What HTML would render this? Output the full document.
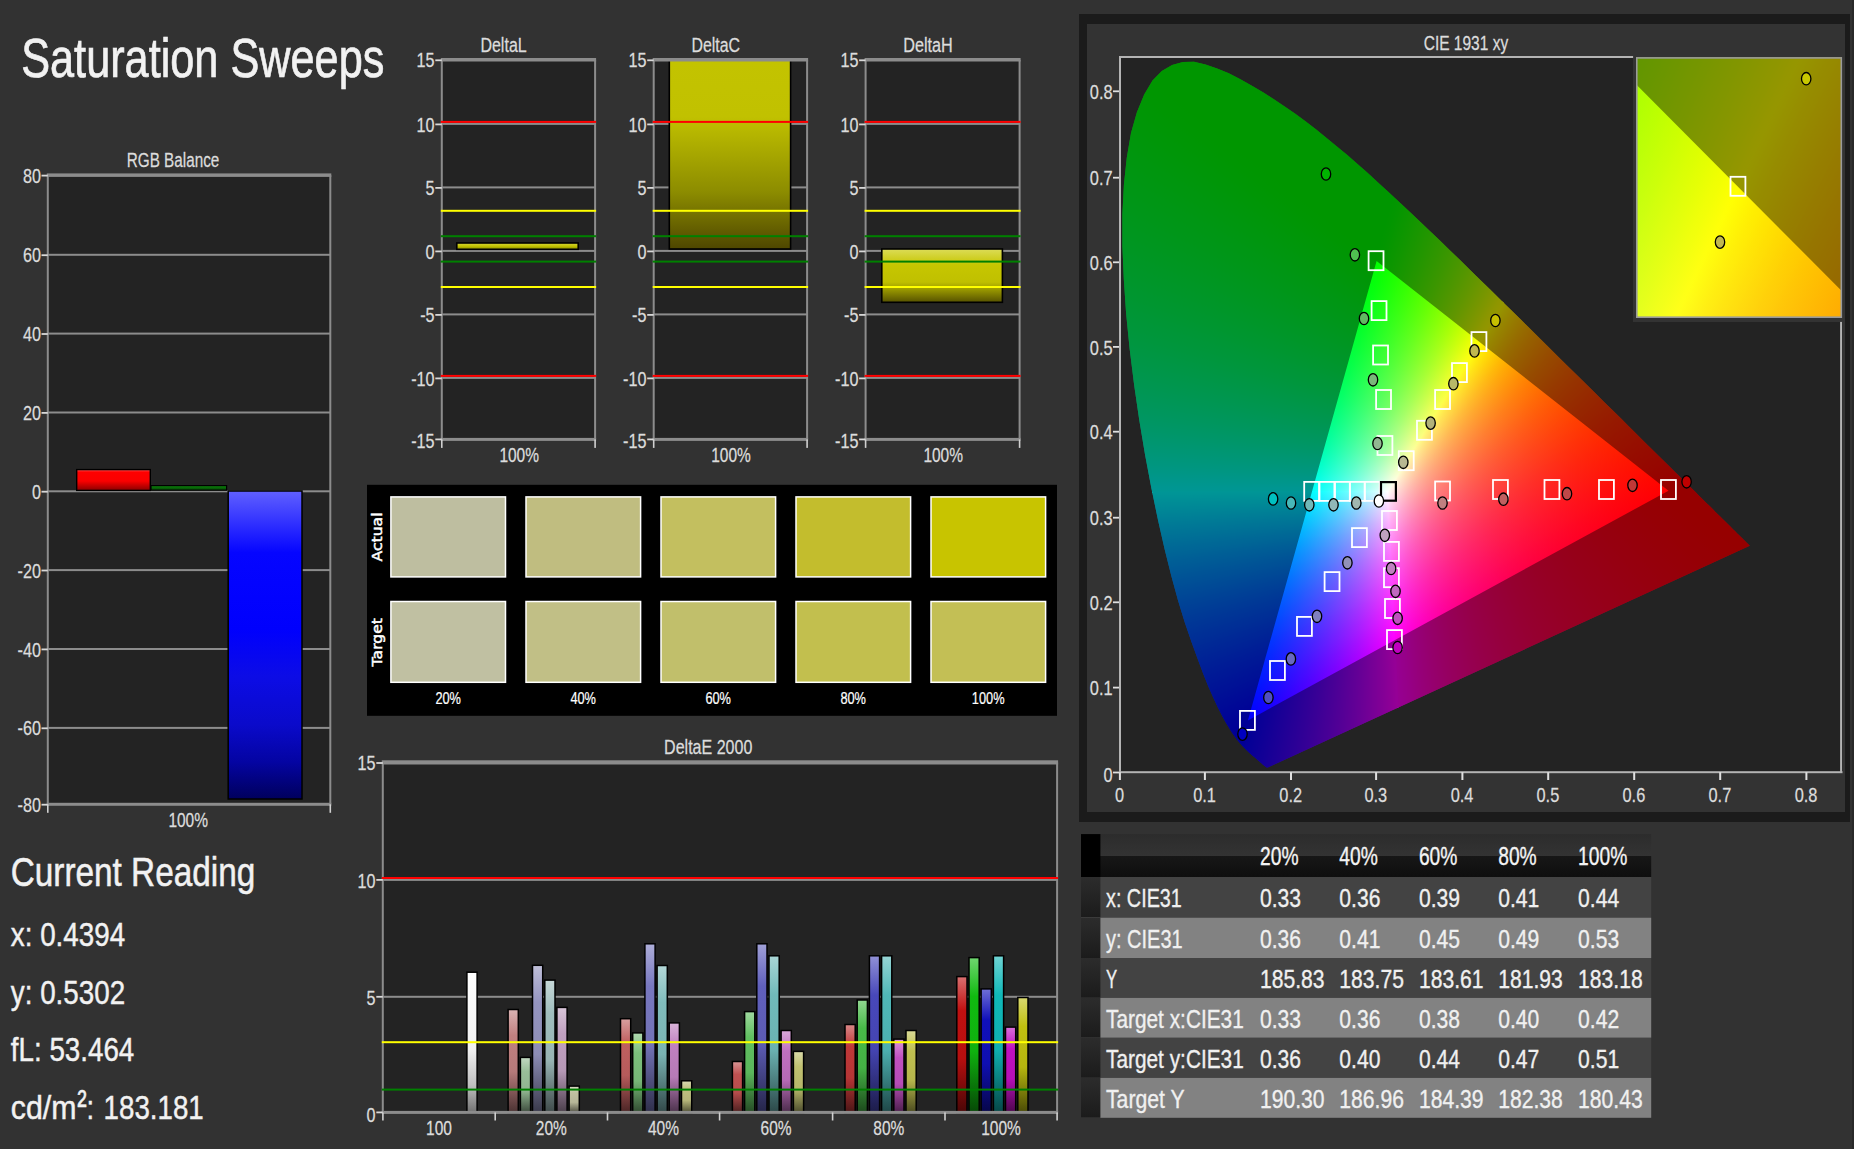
<!DOCTYPE html>
<html><head><meta charset="utf-8"><title>Saturation Sweeps</title>
<style>
html,body{margin:0;padding:0;background:#323232;}
body{width:1854px;height:1149px;overflow:hidden;position:relative;}
svg{display:block;font-family:"Liberation Sans",sans-serif;}
</style></head><body>
<div style="position:absolute;left:1852px;top:0;width:2px;height:1149px;background:#292929"></div>
<div style="position:absolute;left:1079.2px;top:13.8px;width:770.6px;height:807.9px;background:#1b1b1b"></div>
<div style="position:absolute;left:1087px;top:23.9px;width:758.1px;height:788.6px;background:#333"></div>
<div style="position:absolute;left:1119px;top:56px;width:723.5px;height:717px;background:#232323"></div>
<div style="position:absolute;left:1119.0px;top:56.0px;width:722.0px;height:717.0px;overflow:hidden;clip-path:polygon(149.5px 711.2px,149.5px 711.2px,149.5px 711.2px,149.5px 711.2px,149.4px 711.3px,149.4px 711.3px,149.3px 711.3px,149.2px 711.3px,149.2px 711.3px,149.1px 711.3px,149.0px 711.4px,148.9px 711.4px,148.9px 711.4px,148.8px 711.4px,148.7px 711.4px,148.6px 711.4px,148.5px 711.4px,148.4px 711.4px,148.3px 711.4px,148.1px 711.4px,148.0px 711.4px,147.8px 711.4px,147.7px 711.4px,147.5px 711.3px,147.2px 711.2px,146.9px 711.0px,146.6px 710.8px,146.3px 710.6px,145.9px 710.3px,145.5px 710.0px,145.1px 709.6px,144.6px 709.2px,144.0px 708.7px,143.4px 708.2px,142.7px 707.6px,142.0px 706.9px,141.2px 706.2px,140.4px 705.5px,139.4px 704.7px,138.4px 703.8px,137.2px 702.7px,135.9px 701.6px,134.5px 700.4px,133.0px 699.2px,131.4px 697.8px,129.7px 696.2px,127.9px 694.4px,125.9px 692.5px,123.7px 690.2px,121.5px 687.8px,119.1px 685.0px,116.4px 681.5px,113.4px 677.3px,110.2px 672.3px,106.6px 666.3px,102.8px 659.3px,98.7px 651.3px,94.2px 641.6px,89.3px 630.4px,84.1px 617.5px,78.5px 602.6px,72.3px 585.5px,65.7px 566.3px,59.1px 544.7px,52.4px 520.3px,45.7px 493.5px,39.1px 464.5px,32.5px 432.8px,26.1px 398.9px,20.3px 364.3px,15.1px 328.8px,10.6px 292.6px,7.1px 257.3px,4.8px 223.1px,3.4px 189.7px,3.4px 158.3px,4.9px 128.8px,7.8px 101.4px,12.0px 77.1px,17.9px 56.2px,25.2px 38.4px,33.5px 24.5px,42.8px 14.9px,53.1px 9.0px,63.9px 5.9px,75.0px 5.8px,86.5px 8.5px,98.1px 12.4px,109.8px 17.2px,121.4px 23.3px,132.9px 29.7px,144.0px 36.2px,154.9px 43.2px,165.7px 50.4px,176.3px 57.8px,186.8px 65.6px,197.2px 73.6px,207.6px 81.9px,217.9px 90.4px,228.3px 99.1px,238.5px 108.0px,248.8px 117.1px,259.0px 126.4px,269.2px 135.7px,279.4px 145.2px,289.6px 154.8px,299.9px 164.5px,310.1px 174.2px,320.4px 184.1px,330.6px 193.9px,340.8px 203.8px,350.9px 213.8px,361.1px 223.7px,371.2px 233.6px,381.3px 243.5px,391.3px 253.3px,401.3px 263.1px,411.1px 272.8px,420.9px 282.4px,430.5px 292.0px,440.0px 301.4px,449.4px 310.7px,458.7px 319.8px,467.8px 328.8px,476.7px 337.6px,485.4px 346.2px,493.9px 354.5px,502.1px 362.6px,510.0px 370.5px,517.6px 378.1px,524.8px 385.2px,531.7px 392.0px,538.3px 398.5px,544.7px 404.8px,550.8px 410.8px,556.5px 416.5px,561.9px 421.7px,566.9px 426.6px,571.6px 431.3px,576.0px 435.6px,580.1px 439.7px,583.9px 443.4px,587.4px 446.9px,590.7px 450.1px,593.7px 453.1px,596.5px 455.9px,599.1px 458.4px,601.5px 460.8px,603.7px 463.0px,605.8px 465.1px,607.8px 467.0px,609.6px 468.8px,611.4px 470.6px,613.0px 472.2px,614.5px 473.7px,616.0px 475.1px,617.3px 476.5px,618.5px 477.7px,619.7px 478.8px,620.7px 479.8px,621.7px 480.7px,622.5px 481.5px,623.3px 482.3px,624.0px 483.0px,624.7px 483.7px,625.3px 484.3px,625.8px 484.8px,626.3px 485.3px,626.7px 485.7px,627.1px 486.1px,627.4px 486.4px,627.7px 486.7px,628.0px 486.9px,628.2px 487.2px,628.4px 487.4px,628.7px 487.6px,628.9px 487.8px,629.0px 488.0px,629.3px 488.2px,629.5px 488.4px,629.7px 488.6px,629.8px 488.8px,630.0px 489.0px,630.2px 489.1px,630.3px 489.3px,630.4px 489.4px,630.5px 489.5px,630.6px 489.5px,630.6px 489.6px,630.7px 489.6px,630.7px 489.7px,630.7px 489.7px,630.8px 489.7px);">
<div style="position:absolute;left:0;top:0;width:722.0px;height:717.0px;background:#d03030;background:conic-gradient(from 51.232deg at 257.6px 204.9px,rgb(0,0,0) 0.00deg,rgb(0,0,0) 1.78deg,rgb(0,0,0) 3.56deg,rgb(0,0,0) 5.34deg,rgb(0,0,0) 7.13deg,rgb(0,0,0) 8.91deg,rgb(0,0,0) 10.69deg,rgb(0,0,0) 12.47deg,rgb(0,0,0) 14.25deg,rgb(0,0,0) 16.03deg,rgb(0,0,0) 17.81deg,rgb(0,0,0) 19.60deg,rgb(0,0,0) 21.38deg,rgb(0,0,0) 23.16deg,rgb(0,0,0) 24.94deg,rgb(0,0,0) 26.72deg,rgb(0,0,0) 28.50deg,rgb(0,0,0) 30.28deg,rgb(0,0,0) 32.07deg,rgb(0,0,0) 33.85deg,rgb(0,0,0) 35.63deg,rgb(0,0,0) 37.41deg,rgb(0,0,0) 39.19deg,rgb(0,0,0) 40.97deg,rgb(0,0,0) 42.75deg,rgb(0,0,0) 44.53deg,rgb(0,0,0) 46.32deg,rgb(0,0,0) 48.10deg,rgb(0,0,0) 49.88deg,rgb(0,0,0) 51.66deg,rgb(0,0,0) 53.44deg,rgb(0,0,0) 55.22deg,rgb(0,0,0) 57.00deg,rgb(0,0,0) 58.79deg,rgb(0,0,0) 60.57deg,rgb(0,0,0) 62.35deg,rgb(0,0,0) 64.13deg,rgb(0,0,0) 65.91deg,rgb(0,0,0) 67.69deg,rgb(0,0,0) 69.47deg,rgb(0,0,0) 71.26deg,rgb(0,0,0) 73.04deg,rgb(0,0,0) 74.82deg,rgb(0,0,0) 76.60deg,rgb(0,0,3) 78.38deg,rgb(0,0,7) 80.16deg,rgb(0,0,10) 81.94deg,rgb(0,0,14) 83.73deg,rgb(0,0,18) 85.51deg,rgb(0,0,23) 87.29deg,rgb(0,0,27) 89.07deg,rgb(0,0,32) 90.85deg,rgb(0,0,37) 92.63deg,rgb(0,0,42) 94.41deg,rgb(0,0,47) 96.20deg,rgb(0,0,53) 97.98deg,rgb(0,0,59) 99.76deg,rgb(0,0,65) 101.54deg,rgb(0,0,72) 103.32deg,rgb(0,0,79) 105.10deg,rgb(0,0,87) 106.88deg,rgb(0,0,96) 108.66deg,rgb(0,0,105) 110.45deg,rgb(0,0,115) 112.23deg,rgb(0,0,126) 114.01deg,rgb(0,0,139) 115.79deg,rgb(0,0,153) 117.57deg,rgb(0,0,169) 119.35deg,rgb(0,0,187) 121.13deg,rgb(0,0,208) 122.92deg,rgb(0,0,233) 124.70deg,rgb(0,0,255) 126.48deg,rgb(0,0,255) 128.26deg),conic-gradient(from 29.216deg at 128.9px 664.4px,rgb(255,255,0) 0.00deg,rgb(255,255,0) 1.15deg,rgb(255,252,0) 2.29deg,rgb(255,227,0) 3.44deg,rgb(255,206,0) 4.58deg,rgb(255,186,0) 5.73deg,rgb(255,169,0) 6.87deg,rgb(255,154,0) 8.02deg,rgb(255,140,0) 9.17deg,rgb(255,127,0) 10.31deg,rgb(255,116,0) 11.46deg,rgb(255,105,0) 12.60deg,rgb(255,95,0) 13.75deg,rgb(255,86,0) 14.90deg,rgb(255,78,0) 16.04deg,rgb(255,70,0) 17.19deg,rgb(255,63,0) 18.33deg,rgb(255,56,0) 19.48deg,rgb(255,49,0) 20.62deg,rgb(255,43,0) 21.77deg,rgb(255,37,0) 22.92deg,rgb(255,32,0) 24.06deg,rgb(255,27,0) 25.21deg,rgb(255,22,0) 26.35deg,rgb(255,17,0) 27.50deg,rgb(255,13,0) 28.65deg,rgb(255,8,0) 29.79deg,rgb(255,4,0) 30.94deg,rgb(255,0,0) 32.08deg,rgb(255,0,0) 33.23deg,rgb(255,0,0) 34.37deg,rgb(255,0,0) 35.52deg,rgb(255,0,0) 36.67deg,rgb(255,0,0) 37.81deg,rgb(255,0,0) 38.96deg,rgb(255,0,0) 40.10deg,rgb(255,0,0) 41.25deg,rgb(255,0,0) 42.39deg,rgb(255,0,0) 43.54deg,rgb(255,0,0) 44.69deg,rgb(255,0,0) 45.83deg,rgb(255,0,0) 46.98deg,rgb(255,0,0) 48.12deg,rgb(255,0,0) 49.27deg,rgb(255,0,0) 50.42deg,rgb(255,0,0) 51.56deg,rgb(255,0,0) 52.71deg,rgb(255,0,0) 53.85deg,rgb(255,0,0) 55.00deg,rgb(255,0,0) 56.14deg,rgb(255,0,0) 57.29deg,rgb(255,0,0) 58.44deg,rgb(255,0,0) 59.58deg,rgb(255,0,0) 60.73deg,rgb(255,0,0) 61.87deg,rgb(255,0,0) 63.02deg,rgb(255,0,0) 64.17deg,rgb(255,0,0) 65.31deg,rgb(255,0,0) 66.46deg,rgb(255,0,0) 67.60deg,rgb(255,0,0) 68.75deg,rgb(255,255,0) 69.89deg,rgb(255,255,0) 71.04deg,rgb(255,255,0) 72.19deg,rgb(255,255,0) 73.33deg,rgb(255,255,0) 74.48deg,rgb(255,255,0) 75.62deg,rgb(255,255,0) 76.77deg,rgb(255,255,0) 77.92deg,rgb(255,255,0) 79.06deg,rgb(255,255,0) 80.21deg,rgb(255,255,0) 81.35deg,rgb(255,255,0) 82.50deg);background-blend-mode:screen;clip-path:polygon(534.5px -2.0px,724.0px -2.0px,724.0px 719.0px,281.1px 719.0px,267.7px 435.3px)"></div>
<div style="position:absolute;left:0;top:0;width:722.0px;height:717.0px;background:#20b040;background:conic-gradient(from -92.337deg at 549.5px 434.7px,rgb(0,0,255) 0.00deg,rgb(0,0,255) 1.29deg,rgb(0,0,249) 2.57deg,rgb(0,0,233) 3.86deg,rgb(0,0,217) 5.15deg,rgb(0,0,203) 6.43deg,rgb(0,0,190) 7.72deg,rgb(0,0,177) 9.00deg,rgb(0,0,165) 10.29deg,rgb(0,0,154) 11.58deg,rgb(0,0,144) 12.86deg,rgb(0,0,134) 14.15deg,rgb(0,0,125) 15.44deg,rgb(0,0,116) 16.72deg,rgb(0,0,107) 18.01deg,rgb(0,0,99) 19.30deg,rgb(0,0,92) 20.58deg,rgb(0,0,84) 21.87deg,rgb(0,0,77) 23.16deg,rgb(0,0,70) 24.44deg,rgb(0,0,64) 25.73deg,rgb(0,0,57) 27.01deg,rgb(0,0,51) 28.30deg,rgb(0,0,45) 29.59deg,rgb(0,0,39) 30.87deg,rgb(0,0,34) 32.16deg,rgb(0,0,28) 33.45deg,rgb(0,0,23) 34.73deg,rgb(0,0,17) 36.02deg,rgb(0,0,12) 37.31deg,rgb(0,0,7) 38.59deg,rgb(0,0,3) 39.88deg,rgb(0,0,0) 41.16deg,rgb(0,0,0) 42.45deg,rgb(0,0,0) 43.74deg,rgb(0,0,0) 45.02deg,rgb(0,0,0) 46.31deg,rgb(0,0,0) 47.60deg,rgb(0,0,0) 48.88deg,rgb(0,0,0) 50.17deg,rgb(0,0,0) 51.46deg,rgb(0,0,0) 52.74deg,rgb(0,0,0) 54.03deg,rgb(0,0,0) 55.31deg,rgb(0,0,0) 56.60deg,rgb(0,0,0) 57.89deg,rgb(0,0,0) 59.17deg,rgb(0,0,0) 60.46deg,rgb(0,0,0) 61.75deg,rgb(0,0,0) 63.03deg,rgb(0,0,0) 64.32deg,rgb(0,0,0) 65.61deg,rgb(0,0,0) 66.89deg,rgb(0,0,0) 68.18deg,rgb(0,0,0) 69.47deg,rgb(0,0,0) 70.75deg,rgb(0,0,0) 72.04deg,rgb(0,0,0) 73.32deg,rgb(0,0,0) 74.61deg,rgb(0,0,0) 75.90deg,rgb(0,0,0) 77.18deg,rgb(0,0,0) 78.47deg,rgb(0,0,0) 79.76deg,rgb(0,0,0) 81.04deg,rgb(0,0,0) 82.33deg,rgb(0,0,0) 83.62deg,rgb(0,0,0) 84.90deg,rgb(0,0,0) 86.19deg,rgb(0,0,0) 87.47deg,rgb(0,0,0) 88.76deg,rgb(0,0,0) 90.05deg,rgb(0,0,0) 91.33deg,rgb(0,0,0) 92.62deg),conic-gradient(from -31.930deg at 128.9px 664.4px,rgb(0,255,0) 0.00deg,rgb(0,255,0) 0.91deg,rgb(0,255,0) 1.82deg,rgb(0,255,0) 2.73deg,rgb(0,255,0) 3.64deg,rgb(0,255,0) 4.55deg,rgb(0,255,0) 5.46deg,rgb(0,255,0) 6.37deg,rgb(0,255,0) 7.28deg,rgb(0,255,0) 8.19deg,rgb(0,255,0) 9.10deg,rgb(0,255,0) 10.01deg,rgb(0,255,0) 10.91deg,rgb(0,255,0) 11.82deg,rgb(0,255,0) 12.73deg,rgb(0,255,0) 13.64deg,rgb(0,255,0) 14.55deg,rgb(0,255,0) 15.46deg,rgb(0,255,0) 16.37deg,rgb(0,255,0) 17.28deg,rgb(0,255,0) 18.19deg,rgb(0,255,0) 19.10deg,rgb(0,255,0) 20.01deg,rgb(0,255,0) 20.92deg,rgb(0,255,0) 21.83deg,rgb(0,255,0) 22.74deg,rgb(0,255,0) 23.65deg,rgb(0,255,0) 24.56deg,rgb(0,255,0) 25.47deg,rgb(0,255,0) 26.38deg,rgb(0,255,0) 27.29deg,rgb(0,255,0) 28.20deg,rgb(0,255,0) 29.11deg,rgb(0,255,0) 30.02deg,rgb(0,255,0) 30.92deg,rgb(0,255,0) 31.83deg,rgb(0,255,0) 32.74deg,rgb(0,255,0) 33.65deg,rgb(0,255,0) 34.56deg,rgb(0,255,0) 35.47deg,rgb(0,255,0) 36.38deg,rgb(0,255,0) 37.29deg,rgb(0,255,0) 38.20deg,rgb(0,255,0) 39.11deg,rgb(0,255,0) 40.02deg,rgb(0,255,0) 40.93deg,rgb(0,255,0) 41.84deg,rgb(0,255,0) 42.75deg,rgb(0,255,0) 43.66deg,rgb(0,255,0) 44.57deg,rgb(0,255,0) 45.48deg,rgb(0,255,0) 46.39deg,rgb(0,255,0) 47.30deg,rgb(7,255,0) 48.21deg,rgb(18,255,0) 49.12deg,rgb(29,255,0) 50.03deg,rgb(41,255,0) 50.94deg,rgb(53,255,0) 51.84deg,rgb(65,255,0) 52.75deg,rgb(78,255,0) 53.66deg,rgb(91,255,0) 54.57deg,rgb(105,255,0) 55.48deg,rgb(120,255,0) 56.39deg,rgb(135,255,0) 57.30deg,rgb(151,255,0) 58.21deg,rgb(167,255,0) 59.12deg,rgb(185,255,0) 60.03deg,rgb(203,255,0) 60.94deg,rgb(222,255,0) 61.85deg,rgb(242,255,0) 62.76deg,rgb(255,255,0) 63.67deg,rgb(255,255,0) 64.58deg,rgb(255,255,0) 65.49deg);background-blend-mode:screen;clip-path:polygon(269.0px 436.3px,-2.0px 437.1px,-2.0px -2.0px,536.4px -2.0px)"></div>
<div style="position:absolute;left:0;top:0;width:722.0px;height:717.0px;background:#4040d0;background:conic-gradient(from -138.827deg at 549.5px 434.7px,rgb(0,255,0) 0.00deg,rgb(0,255,0) 0.71deg,rgb(0,255,0) 1.41deg,rgb(0,255,0) 2.12deg,rgb(0,0,0) 2.82deg,rgb(0,0,0) 3.53deg,rgb(0,0,0) 4.23deg,rgb(0,0,0) 4.94deg,rgb(0,0,0) 5.65deg,rgb(0,0,0) 6.35deg,rgb(0,0,0) 7.06deg,rgb(0,0,0) 7.76deg,rgb(0,0,0) 8.47deg,rgb(0,0,0) 9.18deg,rgb(0,0,0) 9.88deg,rgb(0,0,0) 10.59deg,rgb(0,0,0) 11.29deg,rgb(0,0,0) 12.00deg,rgb(0,0,0) 12.70deg,rgb(0,0,0) 13.41deg,rgb(0,0,0) 14.12deg,rgb(0,0,0) 14.82deg,rgb(0,0,0) 15.53deg,rgb(0,0,0) 16.23deg,rgb(0,0,0) 16.94deg,rgb(0,0,0) 17.64deg,rgb(0,0,0) 18.35deg,rgb(0,0,0) 19.06deg,rgb(0,0,0) 19.76deg,rgb(0,2,0) 20.47deg,rgb(0,6,0) 21.17deg,rgb(0,11,0) 21.88deg,rgb(0,15,0) 22.59deg,rgb(0,20,0) 23.29deg,rgb(0,25,0) 24.00deg,rgb(0,30,0) 24.70deg,rgb(0,34,0) 25.41deg,rgb(0,39,0) 26.11deg,rgb(0,44,0) 26.82deg,rgb(0,49,0) 27.53deg,rgb(0,54,0) 28.23deg,rgb(0,60,0) 28.94deg,rgb(0,65,0) 29.64deg,rgb(0,70,0) 30.35deg,rgb(0,76,0) 31.05deg,rgb(0,81,0) 31.76deg,rgb(0,87,0) 32.47deg,rgb(0,92,0) 33.17deg,rgb(0,98,0) 33.88deg,rgb(0,104,0) 34.58deg,rgb(0,110,0) 35.29deg,rgb(0,116,0) 36.00deg,rgb(0,123,0) 36.70deg,rgb(0,129,0) 37.41deg,rgb(0,136,0) 38.11deg,rgb(0,142,0) 38.82deg,rgb(0,149,0) 39.52deg,rgb(0,156,0) 40.23deg,rgb(0,163,0) 40.94deg,rgb(0,171,0) 41.64deg,rgb(0,178,0) 42.35deg,rgb(0,186,0) 43.05deg,rgb(0,194,0) 43.76deg,rgb(0,202,0) 44.46deg,rgb(0,210,0) 45.17deg,rgb(0,219,0) 45.88deg,rgb(0,228,0) 46.58deg,rgb(0,237,0) 47.29deg,rgb(0,246,0) 47.99deg,rgb(0,255,0) 48.70deg,rgb(0,255,0) 49.41deg,rgb(0,255,0) 50.11deg,rgb(0,255,0) 50.82deg),conic-gradient(from -184.906deg at 257.6px 204.9px,rgb(255,0,255) 0.00deg,rgb(255,0,255) 0.77deg,rgb(255,0,255) 1.54deg,rgb(253,0,255) 2.30deg,rgb(240,0,255) 3.07deg,rgb(227,0,255) 3.84deg,rgb(215,0,255) 4.61deg,rgb(203,0,255) 5.38deg,rgb(191,0,255) 6.14deg,rgb(179,0,255) 6.91deg,rgb(167,0,255) 7.68deg,rgb(156,0,255) 8.45deg,rgb(145,0,255) 9.21deg,rgb(134,0,255) 9.98deg,rgb(123,0,255) 10.75deg,rgb(113,0,255) 11.52deg,rgb(102,0,255) 12.29deg,rgb(92,0,255) 13.05deg,rgb(82,0,255) 13.82deg,rgb(72,0,255) 14.59deg,rgb(63,0,255) 15.36deg,rgb(53,0,255) 16.13deg,rgb(44,0,255) 16.89deg,rgb(34,0,255) 17.66deg,rgb(25,0,255) 18.43deg,rgb(16,0,255) 19.20deg,rgb(7,0,255) 19.97deg,rgb(0,0,255) 20.73deg,rgb(0,0,255) 21.50deg,rgb(0,0,255) 22.27deg,rgb(0,0,255) 23.04deg,rgb(0,0,255) 23.80deg,rgb(0,0,255) 24.57deg,rgb(0,0,255) 25.34deg,rgb(0,0,255) 26.11deg,rgb(0,0,255) 26.88deg,rgb(0,0,255) 27.64deg,rgb(0,0,255) 28.41deg,rgb(0,0,255) 29.18deg,rgb(0,0,255) 29.95deg,rgb(0,0,255) 30.72deg,rgb(0,0,255) 31.48deg,rgb(0,0,255) 32.25deg,rgb(0,0,255) 33.02deg,rgb(0,0,255) 33.79deg,rgb(0,0,255) 34.56deg,rgb(0,0,255) 35.32deg,rgb(0,0,255) 36.09deg,rgb(0,0,255) 36.86deg,rgb(0,0,255) 37.63deg,rgb(0,0,255) 38.39deg,rgb(0,0,255) 39.16deg,rgb(0,0,255) 39.93deg,rgb(0,0,255) 40.70deg,rgb(0,0,255) 41.47deg,rgb(0,0,255) 42.23deg,rgb(0,0,255) 43.00deg,rgb(0,0,255) 43.77deg,rgb(0,0,255) 44.54deg,rgb(0,0,255) 45.31deg,rgb(0,0,255) 46.07deg,rgb(0,0,255) 46.84deg,rgb(0,0,255) 47.61deg,rgb(0,0,255) 48.38deg,rgb(0,0,255) 49.15deg,rgb(0,0,255) 49.91deg,rgb(0,0,255) 50.68deg,rgb(0,0,255) 51.45deg,rgb(0,0,255) 52.22deg,rgb(0,0,255) 52.98deg,rgb(0,0,255) 53.75deg,rgb(0,0,255) 54.52deg,rgb(0,0,255) 55.29deg);background-blend-mode:screen;clip-path:polygon(-2.0px 719.0px,-2.0px 435.5px,269.3px 434.7px,282.7px 719.0px)"></div>
<svg style="position:absolute;left:0;top:0" width="722.0" height="717.0"><path fill-rule="evenodd" fill="#000" fill-opacity="0.412" d="M-5 -5H727V722H-5Z M549.5 434.7 257.6 204.9 128.9 664.4Z"/></svg>
</div>
<div style="position:absolute;left:1633.1px;top:55px;width:211.9px;height:266.9px;background:#333"></div>
<div style="position:absolute;left:1636.0px;top:57.1px;width:206.0px;height:260.8px;overflow:hidden;">
<div style="position:absolute;left:0;top:0;width:206.0px;height:260.8px;background:#d03030;background:conic-gradient(from 116.902deg at -317.6px -292.2px,rgb(0,0,0) 0.00deg,rgb(0,0,0) 0.45deg,rgb(0,0,0) 0.90deg,rgb(0,0,0) 1.35deg,rgb(0,0,0) 1.81deg,rgb(0,0,0) 2.26deg,rgb(0,0,0) 2.71deg,rgb(0,0,0) 3.16deg,rgb(0,0,0) 3.61deg,rgb(0,0,0) 4.06deg,rgb(0,0,0) 4.51deg,rgb(0,0,0) 4.97deg,rgb(0,0,0) 5.42deg,rgb(0,0,0) 5.87deg,rgb(0,0,0) 6.32deg,rgb(0,0,0) 6.77deg,rgb(0,0,0) 7.22deg,rgb(0,0,0) 7.67deg,rgb(0,0,0) 8.13deg,rgb(0,0,0) 8.58deg,rgb(0,0,0) 9.03deg,rgb(0,0,0) 9.48deg,rgb(0,0,0) 9.93deg,rgb(0,0,0) 10.38deg,rgb(0,0,0) 10.83deg,rgb(0,0,0) 11.29deg,rgb(0,0,0) 11.74deg,rgb(0,0,0) 12.19deg,rgb(0,0,0) 12.64deg,rgb(0,0,0) 13.09deg,rgb(0,0,0) 13.54deg,rgb(0,0,0) 13.99deg,rgb(0,0,0) 14.45deg,rgb(0,0,0) 14.90deg,rgb(0,0,0) 15.35deg,rgb(0,0,0) 15.80deg,rgb(0,0,0) 16.25deg,rgb(0,0,0) 16.70deg,rgb(0,0,0) 17.15deg,rgb(0,0,0) 17.61deg,rgb(0,0,0) 18.06deg,rgb(0,0,1) 18.51deg,rgb(0,0,1) 18.96deg,rgb(0,0,2) 19.41deg,rgb(0,0,3) 19.86deg,rgb(0,0,4) 20.31deg,rgb(0,0,5) 20.77deg,rgb(0,0,6) 21.22deg,rgb(0,0,7) 21.67deg,rgb(0,0,8) 22.12deg,rgb(0,0,9) 22.57deg,rgb(0,0,10) 23.02deg,rgb(0,0,11) 23.48deg,rgb(0,0,12) 23.93deg,rgb(0,0,13) 24.38deg,rgb(0,0,14) 24.83deg,rgb(0,0,15) 25.28deg,rgb(0,0,16) 25.73deg,rgb(0,0,17) 26.18deg,rgb(0,0,18) 26.64deg,rgb(0,0,19) 27.09deg,rgb(0,0,20) 27.54deg,rgb(0,0,22) 27.99deg,rgb(0,0,23) 28.44deg,rgb(0,0,24) 28.89deg,rgb(0,0,25) 29.34deg,rgb(0,0,26) 29.80deg,rgb(0,0,28) 30.25deg,rgb(0,0,29) 30.70deg,rgb(0,0,30) 31.15deg,rgb(0,0,31) 31.60deg,rgb(0,0,33) 32.05deg,rgb(0,0,34) 32.50deg),conic-gradient(from 23.513deg at -844.9px 2111.1px,rgb(255,255,0) 0.00deg,rgb(255,255,0) 0.11deg,rgb(255,255,0) 0.23deg,rgb(255,255,0) 0.34deg,rgb(255,255,0) 0.45deg,rgb(255,255,0) 0.57deg,rgb(255,255,0) 0.68deg,rgb(255,255,0) 0.79deg,rgb(255,255,0) 0.91deg,rgb(255,255,0) 1.02deg,rgb(255,255,0) 1.13deg,rgb(255,255,0) 1.25deg,rgb(255,255,0) 1.36deg,rgb(255,255,0) 1.47deg,rgb(255,255,0) 1.59deg,rgb(255,255,0) 1.70deg,rgb(255,255,0) 1.81deg,rgb(255,255,0) 1.93deg,rgb(255,255,0) 2.04deg,rgb(255,252,0) 2.15deg,rgb(255,249,0) 2.27deg,rgb(255,246,0) 2.38deg,rgb(255,243,0) 2.49deg,rgb(255,240,0) 2.60deg,rgb(255,237,0) 2.72deg,rgb(255,235,0) 2.83deg,rgb(255,232,0) 2.94deg,rgb(255,229,0) 3.06deg,rgb(255,227,0) 3.17deg,rgb(255,224,0) 3.28deg,rgb(255,222,0) 3.40deg,rgb(255,219,0) 3.51deg,rgb(255,217,0) 3.62deg,rgb(255,214,0) 3.74deg,rgb(255,212,0) 3.85deg,rgb(255,209,0) 3.96deg,rgb(255,207,0) 4.08deg,rgb(255,205,0) 4.19deg,rgb(255,203,0) 4.30deg,rgb(255,200,0) 4.42deg,rgb(255,198,0) 4.53deg,rgb(255,196,0) 4.64deg,rgb(255,194,0) 4.76deg,rgb(255,192,0) 4.87deg,rgb(255,190,0) 4.98deg,rgb(255,188,0) 5.10deg,rgb(255,186,0) 5.21deg,rgb(255,184,0) 5.32deg,rgb(255,182,0) 5.44deg,rgb(255,180,0) 5.55deg,rgb(255,178,0) 5.66deg,rgb(255,176,0) 5.78deg,rgb(255,174,0) 5.89deg,rgb(255,172,0) 6.00deg,rgb(255,171,0) 6.12deg,rgb(255,169,0) 6.23deg,rgb(255,167,0) 6.34deg,rgb(255,165,0) 6.46deg,rgb(255,164,0) 6.57deg,rgb(255,162,0) 6.68deg,rgb(255,160,0) 6.80deg,rgb(255,159,0) 6.91deg,rgb(255,157,0) 7.02deg,rgb(255,155,0) 7.14deg,rgb(255,154,0) 7.25deg,rgb(255,152,0) 7.36deg,rgb(255,151,0) 7.47deg,rgb(255,149,0) 7.59deg,rgb(255,148,0) 7.70deg,rgb(255,146,0) 7.81deg,rgb(255,145,0) 7.93deg,rgb(255,143,0) 8.04deg,rgb(255,142,0) 8.15deg);background-blend-mode:screen;clip-path:polygon(208.0px 262.8px,37.2px 262.8px,163.8px -2.0px,208.0px -2.0px)"></div>
<div style="position:absolute;left:0;top:0;width:206.0px;height:260.8px;background:#20b040;background:conic-gradient(from -55.678deg at 877.6px 909.5px,rgb(0,0,41) 0.00deg,rgb(0,0,40) 0.27deg,rgb(0,0,39) 0.55deg,rgb(0,0,38) 0.82deg,rgb(0,0,37) 1.09deg,rgb(0,0,36) 1.37deg,rgb(0,0,34) 1.64deg,rgb(0,0,33) 1.91deg,rgb(0,0,32) 2.19deg,rgb(0,0,31) 2.46deg,rgb(0,0,30) 2.73deg,rgb(0,0,29) 3.01deg,rgb(0,0,28) 3.28deg,rgb(0,0,27) 3.55deg,rgb(0,0,26) 3.83deg,rgb(0,0,25) 4.10deg,rgb(0,0,24) 4.37deg,rgb(0,0,23) 4.65deg,rgb(0,0,22) 4.92deg,rgb(0,0,21) 5.19deg,rgb(0,0,20) 5.47deg,rgb(0,0,19) 5.74deg,rgb(0,0,18) 6.01deg,rgb(0,0,17) 6.29deg,rgb(0,0,16) 6.56deg,rgb(0,0,15) 6.83deg,rgb(0,0,14) 7.11deg,rgb(0,0,13) 7.38deg,rgb(0,0,12) 7.65deg,rgb(0,0,11) 7.93deg,rgb(0,0,10) 8.20deg,rgb(0,0,9) 8.47deg,rgb(0,0,8) 8.75deg,rgb(0,0,7) 9.02deg,rgb(0,0,6) 9.29deg,rgb(0,0,5) 9.57deg,rgb(0,0,4) 9.84deg,rgb(0,0,3) 10.11deg,rgb(0,0,2) 10.39deg,rgb(0,0,1) 10.66deg,rgb(0,0,0) 10.93deg,rgb(0,0,0) 11.21deg,rgb(0,0,0) 11.48deg,rgb(0,0,0) 11.75deg,rgb(0,0,0) 12.03deg,rgb(0,0,0) 12.30deg,rgb(0,0,0) 12.57deg,rgb(0,0,0) 12.85deg,rgb(0,0,0) 13.12deg,rgb(0,0,0) 13.39deg,rgb(0,0,0) 13.67deg,rgb(0,0,0) 13.94deg,rgb(0,0,0) 14.21deg,rgb(0,0,0) 14.49deg,rgb(0,0,0) 14.76deg,rgb(0,0,0) 15.03deg,rgb(0,0,0) 15.31deg,rgb(0,0,0) 15.58deg,rgb(0,0,0) 15.85deg,rgb(0,0,0) 16.13deg,rgb(0,0,0) 16.40deg,rgb(0,0,0) 16.67deg,rgb(0,0,0) 16.95deg,rgb(0,0,0) 17.22deg,rgb(0,0,0) 17.49deg,rgb(0,0,0) 17.77deg,rgb(0,0,0) 18.04deg,rgb(0,0,0) 18.31deg,rgb(0,0,0) 18.59deg,rgb(0,0,0) 18.86deg,rgb(0,0,0) 19.13deg,rgb(0,0,0) 19.41deg,rgb(0,0,0) 19.68deg),conic-gradient(from 19.746deg at -844.9px 2111.1px,rgb(123,255,0) 0.00deg,rgb(125,255,0) 0.11deg,rgb(127,255,0) 0.22deg,rgb(129,255,0) 0.33deg,rgb(131,255,0) 0.43deg,rgb(133,255,0) 0.54deg,rgb(135,255,0) 0.65deg,rgb(138,255,0) 0.76deg,rgb(140,255,0) 0.87deg,rgb(142,255,0) 0.98deg,rgb(144,255,0) 1.08deg,rgb(147,255,0) 1.19deg,rgb(149,255,0) 1.30deg,rgb(151,255,0) 1.41deg,rgb(153,255,0) 1.52deg,rgb(156,255,0) 1.63deg,rgb(158,255,0) 1.74deg,rgb(160,255,0) 1.84deg,rgb(163,255,0) 1.95deg,rgb(165,255,0) 2.06deg,rgb(167,255,0) 2.17deg,rgb(170,255,0) 2.28deg,rgb(172,255,0) 2.39deg,rgb(174,255,0) 2.50deg,rgb(177,255,0) 2.60deg,rgb(179,255,0) 2.71deg,rgb(182,255,0) 2.82deg,rgb(184,255,0) 2.93deg,rgb(187,255,0) 3.04deg,rgb(189,255,0) 3.15deg,rgb(192,255,0) 3.25deg,rgb(194,255,0) 3.36deg,rgb(197,255,0) 3.47deg,rgb(199,255,0) 3.58deg,rgb(202,255,0) 3.69deg,rgb(204,255,0) 3.80deg,rgb(207,255,0) 3.91deg,rgb(210,255,0) 4.01deg,rgb(212,255,0) 4.12deg,rgb(215,255,0) 4.23deg,rgb(218,255,0) 4.34deg,rgb(220,255,0) 4.45deg,rgb(223,255,0) 4.56deg,rgb(226,255,0) 4.67deg,rgb(228,255,0) 4.77deg,rgb(231,255,0) 4.88deg,rgb(234,255,0) 4.99deg,rgb(237,255,0) 5.10deg,rgb(240,255,0) 5.21deg,rgb(242,255,0) 5.32deg,rgb(245,255,0) 5.42deg,rgb(248,255,0) 5.53deg,rgb(251,255,0) 5.64deg,rgb(254,255,0) 5.75deg,rgb(255,255,0) 5.86deg,rgb(255,255,0) 5.97deg,rgb(255,255,0) 6.08deg,rgb(255,255,0) 6.18deg,rgb(255,255,0) 6.29deg,rgb(255,255,0) 6.40deg,rgb(255,255,0) 6.51deg,rgb(255,255,0) 6.62deg,rgb(255,255,0) 6.73deg,rgb(255,255,0) 6.84deg,rgb(255,255,0) 6.94deg,rgb(255,255,0) 7.05deg,rgb(255,255,0) 7.16deg,rgb(255,255,0) 7.27deg,rgb(255,255,0) 7.38deg,rgb(255,255,0) 7.49deg,rgb(255,255,0) 7.59deg,rgb(255,255,0) 7.70deg,rgb(255,255,0) 7.81deg);background-blend-mode:screen;clip-path:polygon(39.0px 262.8px,-2.0px 262.8px,-2.0px -2.0px,165.5px -2.0px)"></div>
<svg style="position:absolute;left:0;top:0" width="206.0" height="260.8"><path fill-rule="evenodd" fill="#000" fill-opacity="0.412" d="M-5 -5H211V266H-5Z M877.6 909.5 -317.6 -292.2 -844.9 2111.1Z"/></svg>
</div>
<svg width="1854" height="1149" viewBox="0 0 1854 1149" style="position:absolute;left:0;top:0">
<defs>
<linearGradient id="g1" x1="0" y1="0" x2="0" y2="1"><stop offset="0" stop-color="#ff5a5a"/><stop offset="0.12" stop-color="#ff0000"/><stop offset="0.55" stop-color="#fa0000"/><stop offset="1" stop-color="#8a0000"/></linearGradient>
<linearGradient id="g2" x1="0" y1="0" x2="0" y2="1"><stop offset="0" stop-color="#0a8a0a"/><stop offset="1" stop-color="#064006"/></linearGradient>
<linearGradient id="g3" x1="0" y1="0" x2="0" y2="1"><stop offset="0" stop-color="#6060ff"/><stop offset="0.2" stop-color="#0505ff"/><stop offset="0.45" stop-color="#0000fd"/><stop offset="0.6" stop-color="#0c0ce6"/><stop offset="0.76" stop-color="#0a0aca"/><stop offset="0.88" stop-color="#0404a2"/><stop offset="1" stop-color="#00005c"/></linearGradient>
<linearGradient id="g4" x1="0" y1="0" x2="0" y2="1"><stop offset="0" stop-color="#d4d440"/><stop offset="0.5" stop-color="#c3c300"/><stop offset="1" stop-color="#8a8a00"/></linearGradient>
<linearGradient id="g5" x1="0" y1="0" x2="0" y2="1"><stop offset="0" stop-color="#c3c300"/><stop offset="0.3" stop-color="#c1c100"/><stop offset="0.7" stop-color="#8c8c00"/><stop offset="1" stop-color="#4e4600"/></linearGradient>
<linearGradient id="g6" x1="0" y1="0" x2="0" y2="1"><stop offset="0" stop-color="#dcdc58"/><stop offset="0.3" stop-color="#c6c600"/><stop offset="0.62" stop-color="#c0c000"/><stop offset="1" stop-color="#565200"/></linearGradient>
<linearGradient id="g7" x1="0" y1="0" x2="0" y2="1"><stop offset="0" stop-color="#ffffff"/><stop offset="0.55" stop-color="#f0f0f0"/><stop offset="0.8" stop-color="#c0c0c0"/><stop offset="1" stop-color="#707070"/></linearGradient>
<linearGradient id="g8" x1="0" y1="0" x2="0" y2="1"><stop offset="0" stop-color="#d9b3b3"/><stop offset="0.25" stop-color="#c08080"/><stop offset="0.6" stop-color="#b67a7a"/><stop offset="1" stop-color="#493131"/></linearGradient>
<linearGradient id="g9" x1="0" y1="0" x2="0" y2="1"><stop offset="0" stop-color="#c1d8c1"/><stop offset="0.25" stop-color="#98be98"/><stop offset="0.6" stop-color="#90b490"/><stop offset="1" stop-color="#3a483a"/></linearGradient>
<linearGradient id="g10" x1="0" y1="0" x2="0" y2="1"><stop offset="0" stop-color="#bfbfd9"/><stop offset="0.25" stop-color="#9494c0"/><stop offset="0.6" stop-color="#8d8db6"/><stop offset="1" stop-color="#383849"/></linearGradient>
<linearGradient id="g11" x1="0" y1="0" x2="0" y2="1"><stop offset="0" stop-color="#c6d8d8"/><stop offset="0.25" stop-color="#a0bebe"/><stop offset="0.6" stop-color="#98b4b4"/><stop offset="1" stop-color="#3d4848"/></linearGradient>
<linearGradient id="g12" x1="0" y1="0" x2="0" y2="1"><stop offset="0" stop-color="#d9c6d9"/><stop offset="0.25" stop-color="#c0a0c0"/><stop offset="0.6" stop-color="#b698b6"/><stop offset="1" stop-color="#493d49"/></linearGradient>
<linearGradient id="g13" x1="0" y1="0" x2="0" y2="1"><stop offset="0" stop-color="#d9d9c6"/><stop offset="0.25" stop-color="#c0c0a0"/><stop offset="0.6" stop-color="#b6b698"/><stop offset="1" stop-color="#49493d"/></linearGradient>
<linearGradient id="g14" x1="0" y1="0" x2="0" y2="1"><stop offset="0" stop-color="#d9a0a0"/><stop offset="0.25" stop-color="#c06060"/><stop offset="0.6" stop-color="#b65b5b"/><stop offset="1" stop-color="#492424"/></linearGradient>
<linearGradient id="g15" x1="0" y1="0" x2="0" y2="1"><stop offset="0" stop-color="#b0d9b0"/><stop offset="0.25" stop-color="#7cc07c"/><stop offset="0.6" stop-color="#76b676"/><stop offset="1" stop-color="#2f492f"/></linearGradient>
<linearGradient id="g16" x1="0" y1="0" x2="0" y2="1"><stop offset="0" stop-color="#aeaed9"/><stop offset="0.25" stop-color="#7878c0"/><stop offset="0.6" stop-color="#7272b6"/><stop offset="1" stop-color="#2e2e49"/></linearGradient>
<linearGradient id="g17" x1="0" y1="0" x2="0" y2="1"><stop offset="0" stop-color="#b3d7d7"/><stop offset="0.25" stop-color="#80bcbc"/><stop offset="0.6" stop-color="#7ab3b3"/><stop offset="1" stop-color="#314747"/></linearGradient>
<linearGradient id="g18" x1="0" y1="0" x2="0" y2="1"><stop offset="0" stop-color="#d9b3d9"/><stop offset="0.25" stop-color="#c080c0"/><stop offset="0.6" stop-color="#b67ab6"/><stop offset="1" stop-color="#493149"/></linearGradient>
<linearGradient id="g19" x1="0" y1="0" x2="0" y2="1"><stop offset="0" stop-color="#d9d9b3"/><stop offset="0.25" stop-color="#c0c080"/><stop offset="0.6" stop-color="#b6b67a"/><stop offset="1" stop-color="#494931"/></linearGradient>
<linearGradient id="g20" x1="0" y1="0" x2="0" y2="1"><stop offset="0" stop-color="#d99696"/><stop offset="0.25" stop-color="#c05050"/><stop offset="0.6" stop-color="#b64c4c"/><stop offset="1" stop-color="#491e1e"/></linearGradient>
<linearGradient id="g21" x1="0" y1="0" x2="0" y2="1"><stop offset="0" stop-color="#a0d9a0"/><stop offset="0.25" stop-color="#60c060"/><stop offset="0.6" stop-color="#5bb65b"/><stop offset="1" stop-color="#244924"/></linearGradient>
<linearGradient id="g22" x1="0" y1="0" x2="0" y2="1"><stop offset="0" stop-color="#a0a0d7"/><stop offset="0.25" stop-color="#6060bc"/><stop offset="0.6" stop-color="#5b5bb3"/><stop offset="1" stop-color="#242447"/></linearGradient>
<linearGradient id="g23" x1="0" y1="0" x2="0" y2="1"><stop offset="0" stop-color="#a9d6d6"/><stop offset="0.25" stop-color="#70baba"/><stop offset="0.6" stop-color="#6ab1b1"/><stop offset="1" stop-color="#2b4747"/></linearGradient>
<linearGradient id="g24" x1="0" y1="0" x2="0" y2="1"><stop offset="0" stop-color="#d9a9d9"/><stop offset="0.25" stop-color="#c070c0"/><stop offset="0.6" stop-color="#b66ab6"/><stop offset="1" stop-color="#492b49"/></linearGradient>
<linearGradient id="g25" x1="0" y1="0" x2="0" y2="1"><stop offset="0" stop-color="#d9d9a9"/><stop offset="0.25" stop-color="#c0c070"/><stop offset="0.6" stop-color="#b6b66a"/><stop offset="1" stop-color="#49492b"/></linearGradient>
<linearGradient id="g26" x1="0" y1="0" x2="0" y2="1"><stop offset="0" stop-color="#d98888"/><stop offset="0.25" stop-color="#c03838"/><stop offset="0.6" stop-color="#b63535"/><stop offset="1" stop-color="#491515"/></linearGradient>
<linearGradient id="g27" x1="0" y1="0" x2="0" y2="1"><stop offset="0" stop-color="#91d691"/><stop offset="0.25" stop-color="#48ba48"/><stop offset="0.6" stop-color="#44b144"/><stop offset="1" stop-color="#1b471b"/></linearGradient>
<linearGradient id="g28" x1="0" y1="0" x2="0" y2="1"><stop offset="0" stop-color="#9191d6"/><stop offset="0.25" stop-color="#4848ba"/><stop offset="0.6" stop-color="#4444b1"/><stop offset="1" stop-color="#1b1b47"/></linearGradient>
<linearGradient id="g29" x1="0" y1="0" x2="0" y2="1"><stop offset="0" stop-color="#96d4d4"/><stop offset="0.25" stop-color="#50b8b8"/><stop offset="0.6" stop-color="#4cafaf"/><stop offset="1" stop-color="#1e4646"/></linearGradient>
<linearGradient id="g30" x1="0" y1="0" x2="0" y2="1"><stop offset="0" stop-color="#d996d9"/><stop offset="0.25" stop-color="#c050c0"/><stop offset="0.6" stop-color="#b64cb6"/><stop offset="1" stop-color="#491e49"/></linearGradient>
<linearGradient id="g31" x1="0" y1="0" x2="0" y2="1"><stop offset="0" stop-color="#d9d996"/><stop offset="0.25" stop-color="#c0c050"/><stop offset="0.6" stop-color="#b6b64c"/><stop offset="1" stop-color="#49491e"/></linearGradient>
<linearGradient id="g32" x1="0" y1="0" x2="0" y2="1"><stop offset="0" stop-color="#d97070"/><stop offset="0.25" stop-color="#c01010"/><stop offset="0.6" stop-color="#b60f0f"/><stop offset="1" stop-color="#490606"/></linearGradient>
<linearGradient id="g33" x1="0" y1="0" x2="0" y2="1"><stop offset="0" stop-color="#70d670"/><stop offset="0.25" stop-color="#10ba10"/><stop offset="0.6" stop-color="#0fb10f"/><stop offset="1" stop-color="#064706"/></linearGradient>
<linearGradient id="g34" x1="0" y1="0" x2="0" y2="1"><stop offset="0" stop-color="#7070d6"/><stop offset="0.25" stop-color="#1010ba"/><stop offset="0.6" stop-color="#0f0fb1"/><stop offset="1" stop-color="#060647"/></linearGradient>
<linearGradient id="g35" x1="0" y1="0" x2="0" y2="1"><stop offset="0" stop-color="#70d4d4"/><stop offset="0.25" stop-color="#10b8b8"/><stop offset="0.6" stop-color="#0fafaf"/><stop offset="1" stop-color="#064646"/></linearGradient>
<linearGradient id="g36" x1="0" y1="0" x2="0" y2="1"><stop offset="0" stop-color="#d970d9"/><stop offset="0.25" stop-color="#c010c0"/><stop offset="0.6" stop-color="#b60fb6"/><stop offset="1" stop-color="#490649"/></linearGradient>
<linearGradient id="g37" x1="0" y1="0" x2="0" y2="1"><stop offset="0" stop-color="#d9d970"/><stop offset="0.25" stop-color="#c0c010"/><stop offset="0.6" stop-color="#b6b60f"/><stop offset="1" stop-color="#494906"/></linearGradient>
<linearGradient id="g38" x1="0" y1="0" x2="0" y2="1"><stop offset="0" stop-color="#2c2c2c"/><stop offset="0.5" stop-color="#333333"/><stop offset="0.505" stop-color="#171717"/><stop offset="1" stop-color="#0e0e0e"/></linearGradient>
<linearGradient id="g39" x1="0" y1="0" x2="0" y2="1"><stop offset="0" stop-color="#2c2c2c"/><stop offset="1" stop-color="#1b1b1b"/></linearGradient>
</defs>
<text x="21.2" y="77.3" font-size="56" textLength="363.2" lengthAdjust="spacingAndGlyphs" fill="#f2f2f2" stroke="#f2f2f2" stroke-width="0.73" >Saturation Sweeps</text>
<rect x="47.8" y="175.2" width="282.5" height="629.1" fill="#232323"/>
<rect x="47.8" y="253.8" width="282.5" height="2" fill="#8c8c8c"/>
<rect x="47.8" y="332.6" width="282.5" height="2" fill="#8c8c8c"/>
<rect x="47.8" y="411.5" width="282.5" height="2" fill="#8c8c8c"/>
<rect x="47.8" y="490.3" width="282.5" height="2" fill="#8c8c8c"/>
<rect x="47.8" y="569.1" width="282.5" height="2" fill="#8c8c8c"/>
<rect x="47.8" y="648.0" width="282.5" height="2" fill="#8c8c8c"/>
<rect x="47.8" y="726.9" width="282.5" height="2" fill="#8c8c8c"/>
<rect x="76.7" y="469.6" width="73.6" height="20.8" fill="url(#g1)" stroke="#000" stroke-width="1.4"/>
<rect x="151" y="485.6" width="75.6" height="4.6" fill="url(#g2)" stroke="#000" stroke-width="1.2"/>
<rect x="228.2" y="491" width="73.8" height="308" fill="url(#g3)" stroke="#000" stroke-width="1.5"/>
<rect x="46.8" y="173.4" width="284.5" height="3.5" fill="#8c8c8c"/>
<rect x="46.8" y="802.8" width="284.5" height="3" fill="#8c8c8c"/>
<rect x="46.8" y="175.2" width="2" height="629.1" fill="#8c8c8c"/>
<rect x="329.3" y="175.2" width="2" height="629.1" fill="#8c8c8c"/>
<rect x="41.5" y="174.7" width="6.3" height="1.8" fill="#d8d8d8"/>
<text x="23.0" y="182.7" font-size="21" textLength="18.0" lengthAdjust="spacingAndGlyphs" fill="#dcdcdc" stroke="#dcdcdc" stroke-width="0.27" >80</text>
<rect x="41.5" y="254.3" width="6.3" height="1.8" fill="#d8d8d8"/>
<text x="23.0" y="262.2" font-size="21" textLength="18.0" lengthAdjust="spacingAndGlyphs" fill="#dcdcdc" stroke="#dcdcdc" stroke-width="0.27" >60</text>
<rect x="41.5" y="333.1" width="6.3" height="1.8" fill="#d8d8d8"/>
<text x="23.0" y="341.1" font-size="21" textLength="18.0" lengthAdjust="spacingAndGlyphs" fill="#dcdcdc" stroke="#dcdcdc" stroke-width="0.27" >40</text>
<rect x="41.5" y="412.0" width="6.3" height="1.8" fill="#d8d8d8"/>
<text x="23.0" y="420.0" font-size="21" textLength="18.0" lengthAdjust="spacingAndGlyphs" fill="#dcdcdc" stroke="#dcdcdc" stroke-width="0.27" >20</text>
<rect x="41.5" y="490.8" width="6.3" height="1.8" fill="#d8d8d8"/>
<text x="32.0" y="498.8" font-size="21" textLength="9.0" lengthAdjust="spacingAndGlyphs" fill="#dcdcdc" stroke="#dcdcdc" stroke-width="0.27" >0</text>
<rect x="41.5" y="569.6" width="6.3" height="1.8" fill="#d8d8d8"/>
<text x="17.6" y="577.6" font-size="21" textLength="23.4" lengthAdjust="spacingAndGlyphs" fill="#dcdcdc" stroke="#dcdcdc" stroke-width="0.27" >-20</text>
<rect x="41.5" y="648.5" width="6.3" height="1.8" fill="#d8d8d8"/>
<text x="17.6" y="656.5" font-size="21" textLength="23.4" lengthAdjust="spacingAndGlyphs" fill="#dcdcdc" stroke="#dcdcdc" stroke-width="0.27" >-40</text>
<rect x="41.5" y="727.4" width="6.3" height="1.8" fill="#d8d8d8"/>
<text x="17.6" y="735.4" font-size="21" textLength="23.4" lengthAdjust="spacingAndGlyphs" fill="#dcdcdc" stroke="#dcdcdc" stroke-width="0.27" >-60</text>
<rect x="41.5" y="803.8" width="6.3" height="1.8" fill="#d8d8d8"/>
<text x="17.6" y="811.8" font-size="21" textLength="23.4" lengthAdjust="spacingAndGlyphs" fill="#dcdcdc" stroke="#dcdcdc" stroke-width="0.27" >-80</text>
<rect x="47.0" y="804.3" width="1.6" height="8.5" fill="#d0d0d0"/>
<rect x="329.5" y="804.3" width="1.6" height="8.5" fill="#d0d0d0"/>
<text x="168.4" y="827.3" font-size="20" textLength="39.6" lengthAdjust="spacingAndGlyphs" fill="#dcdcdc" stroke="#dcdcdc" stroke-width="0.26" >100%</text>
<text x="126.8" y="166.5" font-size="20" textLength="92.5" lengthAdjust="spacingAndGlyphs" fill="#dcdcdc" stroke="#dcdcdc" stroke-width="0.26" >RGB Balance</text>
<text x="10.7" y="885.7" font-size="40.5" textLength="244.6" lengthAdjust="spacingAndGlyphs" fill="#f2f2f2" stroke="#f2f2f2" stroke-width="0.53" >Current Reading</text>
<text x="10.8" y="945.9" font-size="34" textLength="114.4" lengthAdjust="spacingAndGlyphs" fill="#f2f2f2" stroke="#f2f2f2" stroke-width="0.44" >x: 0.4394</text>
<text x="10.8" y="1004.0" font-size="34" textLength="114.4" lengthAdjust="spacingAndGlyphs" fill="#f2f2f2" stroke="#f2f2f2" stroke-width="0.44" >y: 0.5302</text>
<text x="10.8" y="1061.0" font-size="34" textLength="123.5" lengthAdjust="spacingAndGlyphs" fill="#f2f2f2" stroke="#f2f2f2" stroke-width="0.44" >fL: 53.464</text>
<text x="10.8" y="1118.8" font-size="34" textLength="65.8" lengthAdjust="spacingAndGlyphs" fill="#f2f2f2" stroke="#f2f2f2" stroke-width="0.44" >cd/m</text>
<text x="77.2" y="1117.6" font-size="40" textLength="9.4" lengthAdjust="spacingAndGlyphs" fill="#f2f2f2" stroke="#f2f2f2" stroke-width="0.52" >²</text>
<text x="86.6" y="1118.8" font-size="34" textLength="7.6" lengthAdjust="spacingAndGlyphs" fill="#f2f2f2" stroke="#f2f2f2" stroke-width="0.44" >:</text>
<text x="103.6" y="1118.8" font-size="34" textLength="100.1" lengthAdjust="spacingAndGlyphs" fill="#f2f2f2" stroke="#f2f2f2" stroke-width="0.44" >183.181</text>
<rect x="441.8" y="59.8" width="153.3" height="379.6" fill="#232323"/>
<rect x="441.8" y="122.9" width="153.3" height="2" fill="#8c8c8c"/>
<rect x="441.8" y="186.4" width="153.3" height="2" fill="#8c8c8c"/>
<rect x="441.8" y="249.9" width="153.3" height="2" fill="#8c8c8c"/>
<rect x="441.8" y="313.4" width="153.3" height="2" fill="#8c8c8c"/>
<rect x="441.8" y="376.9" width="153.3" height="2" fill="#8c8c8c"/>
<rect x="456.8" y="243.0" width="121.4" height="6.3" fill="url(#g4)" stroke="#000" stroke-width="1.6"/>
<rect x="440.8" y="58.0" width="155.3" height="3.5" fill="#8c8c8c"/>
<rect x="440.8" y="437.9" width="155.3" height="3" fill="#8c8c8c"/>
<rect x="440.8" y="59.8" width="2" height="379.6" fill="#8c8c8c"/>
<rect x="594.1" y="59.8" width="2" height="379.6" fill="#8c8c8c"/>
<rect x="440.8" y="120.9" width="155.3" height="2" fill="#ff0000"/>
<rect x="440.8" y="374.9" width="155.3" height="2" fill="#ff0000"/>
<rect x="440.8" y="209.8" width="155.3" height="2" fill="#ffff00"/>
<rect x="440.8" y="286.0" width="155.3" height="2" fill="#ffff00"/>
<rect x="440.8" y="235.2" width="155.3" height="2" fill="#008000"/>
<rect x="440.8" y="260.6" width="155.3" height="2" fill="#008000"/>
<rect x="435.3" y="59.4" width="6.5" height="1.8" fill="#d8d8d8"/>
<text x="416.6" y="67.4" font-size="21" textLength="18.0" lengthAdjust="spacingAndGlyphs" fill="#dcdcdc" stroke="#dcdcdc" stroke-width="0.27" >15</text>
<rect x="435.3" y="123.5" width="6.5" height="1.8" fill="#d8d8d8"/>
<text x="416.6" y="131.5" font-size="21" textLength="18.0" lengthAdjust="spacingAndGlyphs" fill="#dcdcdc" stroke="#dcdcdc" stroke-width="0.27" >10</text>
<rect x="435.3" y="187.0" width="6.5" height="1.8" fill="#d8d8d8"/>
<text x="425.6" y="195.0" font-size="21" textLength="9.0" lengthAdjust="spacingAndGlyphs" fill="#dcdcdc" stroke="#dcdcdc" stroke-width="0.27" >5</text>
<rect x="435.3" y="250.5" width="6.5" height="1.8" fill="#d8d8d8"/>
<text x="425.6" y="258.5" font-size="21" textLength="9.0" lengthAdjust="spacingAndGlyphs" fill="#dcdcdc" stroke="#dcdcdc" stroke-width="0.27" >0</text>
<rect x="435.3" y="314.0" width="6.5" height="1.8" fill="#d8d8d8"/>
<text x="420.2" y="322.0" font-size="21" textLength="14.4" lengthAdjust="spacingAndGlyphs" fill="#dcdcdc" stroke="#dcdcdc" stroke-width="0.27" >-5</text>
<rect x="435.3" y="377.5" width="6.5" height="1.8" fill="#d8d8d8"/>
<text x="411.2" y="385.5" font-size="21" textLength="23.4" lengthAdjust="spacingAndGlyphs" fill="#dcdcdc" stroke="#dcdcdc" stroke-width="0.27" >-10</text>
<rect x="435.3" y="438.5" width="6.5" height="1.8" fill="#d8d8d8"/>
<text x="411.2" y="447.9" font-size="21" textLength="23.4" lengthAdjust="spacingAndGlyphs" fill="#dcdcdc" stroke="#dcdcdc" stroke-width="0.27" >-15</text>
<rect x="441.0" y="439.4" width="1.6" height="8.5" fill="#d0d0d0"/>
<rect x="594.3" y="439.4" width="1.6" height="8.5" fill="#d0d0d0"/>
<text x="499.4" y="462.0" font-size="20" textLength="39.6" lengthAdjust="spacingAndGlyphs" fill="#dcdcdc" stroke="#dcdcdc" stroke-width="0.26" >100%</text>
<text x="480.4" y="51.9" font-size="20" textLength="46.3" lengthAdjust="spacingAndGlyphs" fill="#dcdcdc" stroke="#dcdcdc" stroke-width="0.26" >DeltaL</text>
<rect x="653.7" y="59.8" width="153.4" height="379.6" fill="#232323"/>
<rect x="653.7" y="122.9" width="153.4" height="2" fill="#8c8c8c"/>
<rect x="653.7" y="186.4" width="153.4" height="2" fill="#8c8c8c"/>
<rect x="653.7" y="249.9" width="153.4" height="2" fill="#8c8c8c"/>
<rect x="653.7" y="313.4" width="153.4" height="2" fill="#8c8c8c"/>
<rect x="653.7" y="376.9" width="153.4" height="2" fill="#8c8c8c"/>
<rect x="669.3" y="59.8" width="121.3" height="189.2" fill="url(#g5)" stroke="#000" stroke-width="1.6"/>
<rect x="652.7" y="58.0" width="155.4" height="3.5" fill="#8c8c8c"/>
<rect x="652.7" y="437.9" width="155.4" height="3" fill="#8c8c8c"/>
<rect x="652.7" y="59.8" width="2" height="379.6" fill="#8c8c8c"/>
<rect x="806.1" y="59.8" width="2" height="379.6" fill="#8c8c8c"/>
<rect x="652.7" y="120.9" width="155.4" height="2" fill="#ff0000"/>
<rect x="652.7" y="374.9" width="155.4" height="2" fill="#ff0000"/>
<rect x="652.7" y="209.8" width="155.4" height="2" fill="#ffff00"/>
<rect x="652.7" y="286.0" width="155.4" height="2" fill="#ffff00"/>
<rect x="652.7" y="235.2" width="155.4" height="2" fill="#008000"/>
<rect x="652.7" y="260.6" width="155.4" height="2" fill="#008000"/>
<rect x="647.2" y="59.4" width="6.5" height="1.8" fill="#d8d8d8"/>
<text x="628.5" y="67.4" font-size="21" textLength="18.0" lengthAdjust="spacingAndGlyphs" fill="#dcdcdc" stroke="#dcdcdc" stroke-width="0.27" >15</text>
<rect x="647.2" y="123.5" width="6.5" height="1.8" fill="#d8d8d8"/>
<text x="628.5" y="131.5" font-size="21" textLength="18.0" lengthAdjust="spacingAndGlyphs" fill="#dcdcdc" stroke="#dcdcdc" stroke-width="0.27" >10</text>
<rect x="647.2" y="187.0" width="6.5" height="1.8" fill="#d8d8d8"/>
<text x="637.5" y="195.0" font-size="21" textLength="9.0" lengthAdjust="spacingAndGlyphs" fill="#dcdcdc" stroke="#dcdcdc" stroke-width="0.27" >5</text>
<rect x="647.2" y="250.5" width="6.5" height="1.8" fill="#d8d8d8"/>
<text x="637.5" y="258.5" font-size="21" textLength="9.0" lengthAdjust="spacingAndGlyphs" fill="#dcdcdc" stroke="#dcdcdc" stroke-width="0.27" >0</text>
<rect x="647.2" y="314.0" width="6.5" height="1.8" fill="#d8d8d8"/>
<text x="632.1" y="322.0" font-size="21" textLength="14.4" lengthAdjust="spacingAndGlyphs" fill="#dcdcdc" stroke="#dcdcdc" stroke-width="0.27" >-5</text>
<rect x="647.2" y="377.5" width="6.5" height="1.8" fill="#d8d8d8"/>
<text x="623.1" y="385.5" font-size="21" textLength="23.4" lengthAdjust="spacingAndGlyphs" fill="#dcdcdc" stroke="#dcdcdc" stroke-width="0.27" >-10</text>
<rect x="647.2" y="438.5" width="6.5" height="1.8" fill="#d8d8d8"/>
<text x="623.1" y="447.9" font-size="21" textLength="23.4" lengthAdjust="spacingAndGlyphs" fill="#dcdcdc" stroke="#dcdcdc" stroke-width="0.27" >-15</text>
<rect x="652.9" y="439.4" width="1.6" height="8.5" fill="#d0d0d0"/>
<rect x="806.3" y="439.4" width="1.6" height="8.5" fill="#d0d0d0"/>
<text x="711.2" y="462.0" font-size="20" textLength="39.6" lengthAdjust="spacingAndGlyphs" fill="#dcdcdc" stroke="#dcdcdc" stroke-width="0.26" >100%</text>
<text x="691.4" y="51.9" font-size="20" textLength="48.7" lengthAdjust="spacingAndGlyphs" fill="#dcdcdc" stroke="#dcdcdc" stroke-width="0.26" >DeltaC</text>
<rect x="865.6" y="59.8" width="154.0" height="379.6" fill="#232323"/>
<rect x="865.6" y="122.9" width="154.0" height="2" fill="#8c8c8c"/>
<rect x="865.6" y="186.4" width="154.0" height="2" fill="#8c8c8c"/>
<rect x="865.6" y="249.9" width="154.0" height="2" fill="#8c8c8c"/>
<rect x="865.6" y="313.4" width="154.0" height="2" fill="#8c8c8c"/>
<rect x="865.6" y="376.9" width="154.0" height="2" fill="#8c8c8c"/>
<rect x="881.8" y="249.0" width="120.6" height="53.3" fill="url(#g6)" stroke="#000" stroke-width="1.6"/>
<rect x="864.6" y="58.0" width="156.0" height="3.5" fill="#8c8c8c"/>
<rect x="864.6" y="437.9" width="156.0" height="3" fill="#8c8c8c"/>
<rect x="864.6" y="59.8" width="2" height="379.6" fill="#8c8c8c"/>
<rect x="1018.6" y="59.8" width="2" height="379.6" fill="#8c8c8c"/>
<rect x="864.6" y="120.9" width="156.0" height="2" fill="#ff0000"/>
<rect x="864.6" y="374.9" width="156.0" height="2" fill="#ff0000"/>
<rect x="864.6" y="209.8" width="156.0" height="2" fill="#ffff00"/>
<rect x="864.6" y="286.0" width="156.0" height="2" fill="#ffff00"/>
<rect x="864.6" y="235.2" width="156.0" height="2" fill="#008000"/>
<rect x="864.6" y="260.6" width="156.0" height="2" fill="#008000"/>
<rect x="859.1" y="59.4" width="6.5" height="1.8" fill="#d8d8d8"/>
<text x="840.4" y="67.4" font-size="21" textLength="18.0" lengthAdjust="spacingAndGlyphs" fill="#dcdcdc" stroke="#dcdcdc" stroke-width="0.27" >15</text>
<rect x="859.1" y="123.5" width="6.5" height="1.8" fill="#d8d8d8"/>
<text x="840.4" y="131.5" font-size="21" textLength="18.0" lengthAdjust="spacingAndGlyphs" fill="#dcdcdc" stroke="#dcdcdc" stroke-width="0.27" >10</text>
<rect x="859.1" y="187.0" width="6.5" height="1.8" fill="#d8d8d8"/>
<text x="849.4" y="195.0" font-size="21" textLength="9.0" lengthAdjust="spacingAndGlyphs" fill="#dcdcdc" stroke="#dcdcdc" stroke-width="0.27" >5</text>
<rect x="859.1" y="250.5" width="6.5" height="1.8" fill="#d8d8d8"/>
<text x="849.4" y="258.5" font-size="21" textLength="9.0" lengthAdjust="spacingAndGlyphs" fill="#dcdcdc" stroke="#dcdcdc" stroke-width="0.27" >0</text>
<rect x="859.1" y="314.0" width="6.5" height="1.8" fill="#d8d8d8"/>
<text x="844.0" y="322.0" font-size="21" textLength="14.4" lengthAdjust="spacingAndGlyphs" fill="#dcdcdc" stroke="#dcdcdc" stroke-width="0.27" >-5</text>
<rect x="859.1" y="377.5" width="6.5" height="1.8" fill="#d8d8d8"/>
<text x="835.0" y="385.5" font-size="21" textLength="23.4" lengthAdjust="spacingAndGlyphs" fill="#dcdcdc" stroke="#dcdcdc" stroke-width="0.27" >-10</text>
<rect x="859.1" y="438.5" width="6.5" height="1.8" fill="#d8d8d8"/>
<text x="835.0" y="447.9" font-size="21" textLength="23.4" lengthAdjust="spacingAndGlyphs" fill="#dcdcdc" stroke="#dcdcdc" stroke-width="0.27" >-15</text>
<rect x="864.8" y="439.4" width="1.6" height="8.5" fill="#d0d0d0"/>
<rect x="1018.8" y="439.4" width="1.6" height="8.5" fill="#d0d0d0"/>
<text x="923.4" y="462.0" font-size="20" textLength="39.6" lengthAdjust="spacingAndGlyphs" fill="#dcdcdc" stroke="#dcdcdc" stroke-width="0.26" >100%</text>
<text x="903.2" y="51.9" font-size="20" textLength="49.6" lengthAdjust="spacingAndGlyphs" fill="#dcdcdc" stroke="#dcdcdc" stroke-width="0.26" >DeltaH</text>
<rect x="367" y="484.8" width="690" height="231" fill="#000"/>
<rect x="390.9" y="496.9" width="114.6" height="80" fill="#bebea0" stroke="#fff" stroke-width="1.5"/>
<rect x="390.9" y="601.5" width="114.6" height="80.8" fill="#c0c0a2" stroke="#fff" stroke-width="1.5"/>
<text x="435.4" y="703.8" font-size="16" textLength="25.6" lengthAdjust="spacingAndGlyphs" fill="#fff" stroke="#fff" stroke-width="0.21" >20%</text>
<rect x="526.0" y="496.9" width="114.6" height="80" fill="#c0bd80" stroke="#fff" stroke-width="1.5"/>
<rect x="526.0" y="601.5" width="114.6" height="80.8" fill="#c1bf86" stroke="#fff" stroke-width="1.5"/>
<text x="570.4" y="703.8" font-size="16" textLength="25.6" lengthAdjust="spacingAndGlyphs" fill="#fff" stroke="#fff" stroke-width="0.21" >40%</text>
<rect x="661.0" y="496.9" width="114.6" height="80" fill="#c3bf5f" stroke="#fff" stroke-width="1.5"/>
<rect x="661.0" y="601.5" width="114.6" height="80.8" fill="#c1bf6b" stroke="#fff" stroke-width="1.5"/>
<text x="705.4" y="703.8" font-size="16" textLength="25.6" lengthAdjust="spacingAndGlyphs" fill="#fff" stroke="#fff" stroke-width="0.21" >60%</text>
<rect x="796.0" y="496.9" width="114.6" height="80" fill="#c3bd2d" stroke="#fff" stroke-width="1.5"/>
<rect x="796.0" y="601.5" width="114.6" height="80.8" fill="#c2bf4e" stroke="#fff" stroke-width="1.5"/>
<text x="840.4" y="703.8" font-size="16" textLength="25.6" lengthAdjust="spacingAndGlyphs" fill="#fff" stroke="#fff" stroke-width="0.21" >80%</text>
<rect x="931.0" y="496.9" width="114.6" height="80" fill="#c8c400" stroke="#fff" stroke-width="1.5"/>
<rect x="931.0" y="601.5" width="114.6" height="80.8" fill="#c3bf55" stroke="#fff" stroke-width="1.5"/>
<text x="971.8" y="703.8" font-size="16" textLength="32.7" lengthAdjust="spacingAndGlyphs" fill="#fff" stroke="#fff" stroke-width="0.21" >100%</text>
<text transform="translate(381.8,537) rotate(-90)" x="-24.5" y="0" font-size="13.4" font-family="DejaVu Sans, sans-serif" stroke="#fff" stroke-width="0.45" textLength="49" lengthAdjust="spacingAndGlyphs" fill="#fff">Actual</text>
<text transform="translate(381.8,642.2) rotate(-90)" x="-24.2" y="0" font-size="13.4" font-family="DejaVu Sans, sans-serif" stroke="#fff" stroke-width="0.45" textLength="48.4" lengthAdjust="spacingAndGlyphs" fill="#fff">Target</text>
<rect x="382.8" y="762.4" width="674.3" height="350.0" fill="#232323"/>
<rect x="382.8" y="878.9" width="674.3" height="2" fill="#8c8c8c"/>
<rect x="382.8" y="995.8" width="674.3" height="2" fill="#8c8c8c"/>
<rect x="466.9" y="972.2" width="10.2" height="140.9" fill="url(#g7)" stroke="#000" stroke-width="1.5"/>
<rect x="508.1" y="1009.5" width="10.2" height="103.7" fill="url(#g8)" stroke="#000" stroke-width="1.5"/>
<rect x="520.4" y="1057.4" width="10.2" height="55.8" fill="url(#g9)" stroke="#000" stroke-width="1.5"/>
<rect x="532.5" y="965.3" width="10.2" height="147.9" fill="url(#g10)" stroke="#000" stroke-width="1.5"/>
<rect x="544.8" y="980.1" width="10.2" height="133.1" fill="url(#g11)" stroke="#000" stroke-width="1.5"/>
<rect x="556.9" y="1007.4" width="10.2" height="105.7" fill="url(#g12)" stroke="#000" stroke-width="1.5"/>
<rect x="569.1" y="1086.1" width="10.2" height="27.1" fill="url(#g13)" stroke="#000" stroke-width="1.5"/>
<rect x="620.5" y="1018.7" width="10.2" height="94.4" fill="url(#g14)" stroke="#000" stroke-width="1.5"/>
<rect x="632.7" y="1032.9" width="10.2" height="80.3" fill="url(#g15)" stroke="#000" stroke-width="1.5"/>
<rect x="644.9" y="943.8" width="10.2" height="169.4" fill="url(#g16)" stroke="#000" stroke-width="1.5"/>
<rect x="657.1" y="965.5" width="10.2" height="147.6" fill="url(#g17)" stroke="#000" stroke-width="1.5"/>
<rect x="669.2" y="1022.9" width="10.2" height="90.2" fill="url(#g18)" stroke="#000" stroke-width="1.5"/>
<rect x="681.5" y="1080.8" width="10.2" height="32.4" fill="url(#g19)" stroke="#000" stroke-width="1.5"/>
<rect x="732.4" y="1061.5" width="10.2" height="51.6" fill="url(#g20)" stroke="#000" stroke-width="1.5"/>
<rect x="744.6" y="1011.6" width="10.2" height="101.6" fill="url(#g21)" stroke="#000" stroke-width="1.5"/>
<rect x="756.8" y="943.8" width="10.2" height="169.4" fill="url(#g22)" stroke="#000" stroke-width="1.5"/>
<rect x="769.0" y="955.8" width="10.2" height="157.4" fill="url(#g23)" stroke="#000" stroke-width="1.5"/>
<rect x="781.1" y="1030.5" width="10.2" height="82.6" fill="url(#g24)" stroke="#000" stroke-width="1.5"/>
<rect x="793.4" y="1051.4" width="10.2" height="61.8" fill="url(#g25)" stroke="#000" stroke-width="1.5"/>
<rect x="845.0" y="1024.5" width="10.2" height="88.6" fill="url(#g26)" stroke="#000" stroke-width="1.5"/>
<rect x="857.2" y="1000.0" width="10.2" height="113.2" fill="url(#g27)" stroke="#000" stroke-width="1.5"/>
<rect x="869.4" y="955.8" width="10.2" height="157.4" fill="url(#g28)" stroke="#000" stroke-width="1.5"/>
<rect x="881.6" y="955.8" width="10.2" height="157.4" fill="url(#g29)" stroke="#000" stroke-width="1.5"/>
<rect x="893.8" y="1039.1" width="10.2" height="74.0" fill="url(#g30)" stroke="#000" stroke-width="1.5"/>
<rect x="906.0" y="1030.5" width="10.2" height="82.6" fill="url(#g31)" stroke="#000" stroke-width="1.5"/>
<rect x="956.8" y="976.6" width="10.2" height="136.5" fill="url(#g32)" stroke="#000" stroke-width="1.5"/>
<rect x="969.0" y="957.6" width="10.2" height="155.5" fill="url(#g33)" stroke="#000" stroke-width="1.5"/>
<rect x="981.1" y="988.9" width="10.2" height="124.3" fill="url(#g34)" stroke="#000" stroke-width="1.5"/>
<rect x="993.4" y="955.8" width="10.2" height="157.4" fill="url(#g35)" stroke="#000" stroke-width="1.5"/>
<rect x="1005.5" y="1027.1" width="10.2" height="86.1" fill="url(#g36)" stroke="#000" stroke-width="1.5"/>
<rect x="1017.8" y="997.5" width="10.2" height="115.7" fill="url(#g37)" stroke="#000" stroke-width="1.5"/>
<rect x="381.8" y="760.3" width="676.3" height="4.2" fill="#8c8c8c"/>
<rect x="381.8" y="1110.9" width="676.3" height="3" fill="#8c8c8c"/>
<rect x="381.8" y="762.4" width="2" height="350.0" fill="#8c8c8c"/>
<rect x="1056.1" y="762.4" width="2" height="350.0" fill="#8c8c8c"/>
<rect x="381.8" y="877.0" width="676.3" height="2" fill="#ff0000"/>
<rect x="381.8" y="1041.2" width="676.3" height="2" fill="#ffff00"/>
<rect x="381.8" y="1088.6" width="676.3" height="2" fill="#008000"/>
<rect x="376.3" y="762.1" width="6.5" height="1.8" fill="#d8d8d8"/>
<text x="357.6" y="769.7" font-size="21" textLength="18.0" lengthAdjust="spacingAndGlyphs" fill="#dcdcdc" stroke="#dcdcdc" stroke-width="0.27" >15</text>
<rect x="376.3" y="879.0" width="6.5" height="1.8" fill="#d8d8d8"/>
<text x="357.6" y="887.9" font-size="21" textLength="18.0" lengthAdjust="spacingAndGlyphs" fill="#dcdcdc" stroke="#dcdcdc" stroke-width="0.27" >10</text>
<rect x="376.3" y="995.9" width="6.5" height="1.8" fill="#d8d8d8"/>
<text x="366.6" y="1004.8" font-size="21" textLength="9.0" lengthAdjust="spacingAndGlyphs" fill="#dcdcdc" stroke="#dcdcdc" stroke-width="0.27" >5</text>
<rect x="376.3" y="1111.5" width="6.5" height="1.8" fill="#d8d8d8"/>
<text x="366.6" y="1122.0" font-size="21" textLength="9.0" lengthAdjust="spacingAndGlyphs" fill="#dcdcdc" stroke="#dcdcdc" stroke-width="0.27" >0</text>
<rect x="382.1" y="1112.4" width="1.6" height="8.1" fill="#d0d0d0"/>
<rect x="494.4" y="1112.4" width="1.6" height="8.1" fill="#d0d0d0"/>
<rect x="606.7" y="1112.4" width="1.6" height="8.1" fill="#d0d0d0"/>
<rect x="718.8" y="1112.4" width="1.6" height="8.1" fill="#d0d0d0"/>
<rect x="831.8" y="1112.4" width="1.6" height="8.1" fill="#d0d0d0"/>
<rect x="944.2" y="1112.4" width="1.6" height="8.1" fill="#d0d0d0"/>
<rect x="1056.3" y="1112.4" width="1.6" height="8.1" fill="#d0d0d0"/>
<text x="426.1" y="1134.9" font-size="20" textLength="25.9" lengthAdjust="spacingAndGlyphs" fill="#dcdcdc" stroke="#dcdcdc" stroke-width="0.26" >100</text>
<text x="535.8" y="1134.9" font-size="20" textLength="31.0" lengthAdjust="spacingAndGlyphs" fill="#dcdcdc" stroke="#dcdcdc" stroke-width="0.26" >20%</text>
<text x="648.0" y="1134.9" font-size="20" textLength="31.0" lengthAdjust="spacingAndGlyphs" fill="#dcdcdc" stroke="#dcdcdc" stroke-width="0.26" >40%</text>
<text x="760.6" y="1134.9" font-size="20" textLength="31.0" lengthAdjust="spacingAndGlyphs" fill="#dcdcdc" stroke="#dcdcdc" stroke-width="0.26" >60%</text>
<text x="873.3" y="1134.9" font-size="20" textLength="31.0" lengthAdjust="spacingAndGlyphs" fill="#dcdcdc" stroke="#dcdcdc" stroke-width="0.26" >80%</text>
<text x="981.2" y="1134.9" font-size="20" textLength="39.6" lengthAdjust="spacingAndGlyphs" fill="#dcdcdc" stroke="#dcdcdc" stroke-width="0.26" >100%</text>
<text x="664.1" y="754.2" font-size="21" textLength="88.3" lengthAdjust="spacingAndGlyphs" fill="#dcdcdc" stroke="#dcdcdc" stroke-width="0.27" >DeltaE 2000</text>
<rect x="1636.8" y="57.9" width="204.5" height="259.3" fill="none" stroke="#9a9a9a" stroke-width="1.6"/>
<rect x="1119.0" y="56.0" width="2" height="717.0" fill="#b4b4b4"/>
<rect x="1119.0" y="56.0" width="514.1" height="2" fill="#b4b4b4"/>
<rect x="1119.0" y="771.2" width="723.5" height="2" fill="#b4b4b4"/>
<rect x="1840.1" y="321.9" width="2" height="451.1" fill="#b4b4b4"/>
<rect x="1368.6" y="251.2" width="14.9" height="19.0" fill="none" stroke="#fff" stroke-width="1.8"/>
<rect x="1371.6" y="301.1" width="14.9" height="19.0" fill="none" stroke="#fff" stroke-width="1.8"/>
<rect x="1373.1" y="345.5" width="14.9" height="19.0" fill="none" stroke="#fff" stroke-width="1.8"/>
<rect x="1376.1" y="390.0" width="14.9" height="19.0" fill="none" stroke="#fff" stroke-width="1.8"/>
<rect x="1377.5" y="436.0" width="14.9" height="19.0" fill="none" stroke="#fff" stroke-width="1.8"/>
<rect x="1471.5" y="332.1" width="14.9" height="19.0" fill="none" stroke="#fff" stroke-width="1.8"/>
<rect x="1452.0" y="363.1" width="14.9" height="19.0" fill="none" stroke="#fff" stroke-width="1.8"/>
<rect x="1435.1" y="390.0" width="14.9" height="19.0" fill="none" stroke="#fff" stroke-width="1.8"/>
<rect x="1417.0" y="420.8" width="14.9" height="19.0" fill="none" stroke="#fff" stroke-width="1.8"/>
<rect x="1398.8" y="451.2" width="14.9" height="19.0" fill="none" stroke="#fff" stroke-width="1.8"/>
<rect x="1304.2" y="481.9" width="14.9" height="19.0" fill="none" stroke="#fff" stroke-width="1.8"/>
<rect x="1319.5" y="481.9" width="14.9" height="19.0" fill="none" stroke="#fff" stroke-width="1.8"/>
<rect x="1335.0" y="481.9" width="14.9" height="19.0" fill="none" stroke="#fff" stroke-width="1.8"/>
<rect x="1349.8" y="481.9" width="14.9" height="19.0" fill="none" stroke="#fff" stroke-width="1.8"/>
<rect x="1364.8" y="481.9" width="14.9" height="19.0" fill="none" stroke="#fff" stroke-width="1.8"/>
<rect x="1435.1" y="481.5" width="14.9" height="19.0" fill="none" stroke="#fff" stroke-width="1.8"/>
<rect x="1493.0" y="480.0" width="14.9" height="19.0" fill="none" stroke="#fff" stroke-width="1.8"/>
<rect x="1544.5" y="480.0" width="14.9" height="19.0" fill="none" stroke="#fff" stroke-width="1.8"/>
<rect x="1599.0" y="480.0" width="14.9" height="19.0" fill="none" stroke="#fff" stroke-width="1.8"/>
<rect x="1661.0" y="480.0" width="14.9" height="19.0" fill="none" stroke="#fff" stroke-width="1.8"/>
<rect x="1382.0" y="511.0" width="14.9" height="19.0" fill="none" stroke="#fff" stroke-width="1.8"/>
<rect x="1384.0" y="541.9" width="14.9" height="19.0" fill="none" stroke="#fff" stroke-width="1.8"/>
<rect x="1384.0" y="568.2" width="14.9" height="19.0" fill="none" stroke="#fff" stroke-width="1.8"/>
<rect x="1385.0" y="599.0" width="14.9" height="19.0" fill="none" stroke="#fff" stroke-width="1.8"/>
<rect x="1387.0" y="630.1" width="14.9" height="19.0" fill="none" stroke="#fff" stroke-width="1.8"/>
<rect x="1352.0" y="528.1" width="14.9" height="19.0" fill="none" stroke="#fff" stroke-width="1.8"/>
<rect x="1324.6" y="572.1" width="14.9" height="19.0" fill="none" stroke="#fff" stroke-width="1.8"/>
<rect x="1297.0" y="616.9" width="14.9" height="19.0" fill="none" stroke="#fff" stroke-width="1.8"/>
<rect x="1270.0" y="661.0" width="14.9" height="19.0" fill="none" stroke="#fff" stroke-width="1.8"/>
<rect x="1240.0" y="710.9" width="14.9" height="19.0" fill="none" stroke="#fff" stroke-width="1.8"/>
<rect x="1381.0" y="482.1" width="14.9" height="18.6" fill="none" stroke="#000" stroke-width="2.2"/>
<ellipse cx="1326.0" cy="174.0" rx="4.7" ry="6.2" fill="#00b400" stroke="#000" stroke-width="1.3"/>
<ellipse cx="1354.9" cy="254.8" rx="4.7" ry="6.2" fill="#50c050" stroke="#000" stroke-width="1.3"/>
<ellipse cx="1364.0" cy="318.5" rx="4.7" ry="6.2" fill="#62b862" stroke="#000" stroke-width="1.3"/>
<ellipse cx="1373.0" cy="379.8" rx="4.7" ry="6.2" fill="#7ab87a" stroke="#000" stroke-width="1.3"/>
<ellipse cx="1377.5" cy="443.5" rx="4.7" ry="6.2" fill="#92b892" stroke="#000" stroke-width="1.3"/>
<ellipse cx="1495.4" cy="320.5" rx="4.7" ry="6.2" fill="#c6c000" stroke="#000" stroke-width="1.3"/>
<ellipse cx="1474.5" cy="350.9" rx="4.7" ry="6.2" fill="#c0b850" stroke="#000" stroke-width="1.3"/>
<ellipse cx="1453.4" cy="383.7" rx="4.7" ry="6.2" fill="#b8b868" stroke="#000" stroke-width="1.3"/>
<ellipse cx="1430.6" cy="423.1" rx="4.7" ry="6.2" fill="#b2b27a" stroke="#000" stroke-width="1.3"/>
<ellipse cx="1403.3" cy="462.3" rx="4.7" ry="6.2" fill="#b8b892" stroke="#000" stroke-width="1.3"/>
<ellipse cx="1273.1" cy="498.9" rx="4.7" ry="6.2" fill="#00c0c0" stroke="#000" stroke-width="1.3"/>
<ellipse cx="1291.0" cy="503.0" rx="4.7" ry="6.2" fill="#48b8b8" stroke="#000" stroke-width="1.3"/>
<ellipse cx="1309.3" cy="504.8" rx="4.7" ry="6.2" fill="#72b8b8" stroke="#000" stroke-width="1.3"/>
<ellipse cx="1333.5" cy="504.8" rx="4.7" ry="6.2" fill="#92b8b8" stroke="#000" stroke-width="1.3"/>
<ellipse cx="1356.3" cy="503.0" rx="4.7" ry="6.2" fill="#a2b8b0" stroke="#000" stroke-width="1.3"/>
<ellipse cx="1378.9" cy="501.0" rx="4.7" ry="6.2" fill="#ffffff" stroke="#000" stroke-width="1.3"/>
<ellipse cx="1442.5" cy="503.0" rx="4.7" ry="6.2" fill="#c08080" stroke="#000" stroke-width="1.3"/>
<ellipse cx="1503.4" cy="499.2" rx="4.7" ry="6.2" fill="#c06060" stroke="#000" stroke-width="1.3"/>
<ellipse cx="1567.0" cy="493.7" rx="4.7" ry="6.2" fill="#c04848" stroke="#000" stroke-width="1.3"/>
<ellipse cx="1632.5" cy="485.3" rx="4.7" ry="6.2" fill="#c03838" stroke="#000" stroke-width="1.3"/>
<ellipse cx="1686.6" cy="481.8" rx="4.7" ry="6.2" fill="#c00000" stroke="#000" stroke-width="1.3"/>
<ellipse cx="1384.8" cy="535.3" rx="4.7" ry="6.2" fill="#c0a0c0" stroke="#000" stroke-width="1.3"/>
<ellipse cx="1391.1" cy="568.5" rx="4.7" ry="6.2" fill="#c080c0" stroke="#000" stroke-width="1.3"/>
<ellipse cx="1395.5" cy="591.3" rx="4.7" ry="6.2" fill="#c068c0" stroke="#000" stroke-width="1.3"/>
<ellipse cx="1397.6" cy="618.3" rx="4.7" ry="6.2" fill="#c050c0" stroke="#000" stroke-width="1.3"/>
<ellipse cx="1397.6" cy="647.5" rx="4.7" ry="6.2" fill="#c000c0" stroke="#000" stroke-width="1.3"/>
<ellipse cx="1347.4" cy="562.8" rx="4.7" ry="6.2" fill="#9292b8" stroke="#000" stroke-width="1.3"/>
<ellipse cx="1317.0" cy="616.3" rx="4.7" ry="6.2" fill="#8080c0" stroke="#000" stroke-width="1.3"/>
<ellipse cx="1290.9" cy="658.9" rx="4.7" ry="6.2" fill="#6868c0" stroke="#000" stroke-width="1.3"/>
<ellipse cx="1268.4" cy="697.5" rx="4.7" ry="6.2" fill="#5050c0" stroke="#000" stroke-width="1.3"/>
<ellipse cx="1242.5" cy="734.1" rx="4.7" ry="6.2" fill="#0000c0" stroke="#000" stroke-width="1.3"/>
<rect x="1730.5" y="176.8" width="14.9" height="19.0" fill="none" stroke="#fff" stroke-width="1.8"/>
<ellipse cx="1806.2" cy="78.7" rx="4.7" ry="6.2" fill="#c8c800" stroke="#000" stroke-width="1.3"/>
<ellipse cx="1720" cy="242.1" rx="4.7" ry="6.2" fill="#c0b850" stroke="#000" stroke-width="1.3"/>
<rect x="1118.9" y="772.2" width="2.0" height="7.8" fill="#e0e0e0"/>
<text x="1115.0" y="802.0" font-size="21" textLength="9.1" lengthAdjust="spacingAndGlyphs" fill="#dcdcdc" stroke="#dcdcdc" stroke-width="0.27" >0</text>
<rect x="1113.0" y="771.6" width="6.0" height="1.8" fill="#e0e0e0"/>
<text x="1103.5" y="782.1" font-size="21" textLength="9.1" lengthAdjust="spacingAndGlyphs" fill="#dcdcdc" stroke="#dcdcdc" stroke-width="0.27" >0</text>
<rect x="1203.9" y="772.2" width="2.0" height="7.8" fill="#e0e0e0"/>
<text x="1193.2" y="802.0" font-size="21" textLength="22.8" lengthAdjust="spacingAndGlyphs" fill="#dcdcdc" stroke="#dcdcdc" stroke-width="0.27" >0.1</text>
<rect x="1113.0" y="686.7" width="6.0" height="1.8" fill="#e0e0e0"/>
<text x="1089.8" y="695.3" font-size="21" textLength="22.8" lengthAdjust="spacingAndGlyphs" fill="#dcdcdc" stroke="#dcdcdc" stroke-width="0.27" >0.1</text>
<rect x="1290.0" y="772.2" width="2.0" height="7.8" fill="#e0e0e0"/>
<text x="1279.3" y="802.0" font-size="21" textLength="22.8" lengthAdjust="spacingAndGlyphs" fill="#dcdcdc" stroke="#dcdcdc" stroke-width="0.27" >0.2</text>
<rect x="1113.0" y="601.4" width="6.0" height="1.8" fill="#e0e0e0"/>
<text x="1089.8" y="610.0" font-size="21" textLength="22.8" lengthAdjust="spacingAndGlyphs" fill="#dcdcdc" stroke="#dcdcdc" stroke-width="0.27" >0.2</text>
<rect x="1375.1" y="772.2" width="2.0" height="7.8" fill="#e0e0e0"/>
<text x="1364.4" y="802.0" font-size="21" textLength="22.8" lengthAdjust="spacingAndGlyphs" fill="#dcdcdc" stroke="#dcdcdc" stroke-width="0.27" >0.3</text>
<rect x="1113.0" y="516.8" width="6.0" height="1.8" fill="#e0e0e0"/>
<text x="1089.8" y="525.4" font-size="21" textLength="22.8" lengthAdjust="spacingAndGlyphs" fill="#dcdcdc" stroke="#dcdcdc" stroke-width="0.27" >0.3</text>
<rect x="1461.4" y="772.2" width="2.0" height="7.8" fill="#e0e0e0"/>
<text x="1450.7" y="802.0" font-size="21" textLength="22.8" lengthAdjust="spacingAndGlyphs" fill="#dcdcdc" stroke="#dcdcdc" stroke-width="0.27" >0.4</text>
<rect x="1113.0" y="430.8" width="6.0" height="1.8" fill="#e0e0e0"/>
<text x="1089.8" y="439.4" font-size="21" textLength="22.8" lengthAdjust="spacingAndGlyphs" fill="#dcdcdc" stroke="#dcdcdc" stroke-width="0.27" >0.4</text>
<rect x="1547.2" y="772.2" width="2.0" height="7.8" fill="#e0e0e0"/>
<text x="1536.5" y="802.0" font-size="21" textLength="22.8" lengthAdjust="spacingAndGlyphs" fill="#dcdcdc" stroke="#dcdcdc" stroke-width="0.27" >0.5</text>
<rect x="1113.0" y="346.0" width="6.0" height="1.8" fill="#e0e0e0"/>
<text x="1089.8" y="354.6" font-size="21" textLength="22.8" lengthAdjust="spacingAndGlyphs" fill="#dcdcdc" stroke="#dcdcdc" stroke-width="0.27" >0.5</text>
<rect x="1633.2" y="772.2" width="2.0" height="7.8" fill="#e0e0e0"/>
<text x="1622.5" y="802.0" font-size="21" textLength="22.8" lengthAdjust="spacingAndGlyphs" fill="#dcdcdc" stroke="#dcdcdc" stroke-width="0.27" >0.6</text>
<rect x="1113.0" y="261.4" width="6.0" height="1.8" fill="#e0e0e0"/>
<text x="1089.8" y="270.0" font-size="21" textLength="22.8" lengthAdjust="spacingAndGlyphs" fill="#dcdcdc" stroke="#dcdcdc" stroke-width="0.27" >0.6</text>
<rect x="1719.2" y="772.2" width="2.0" height="7.8" fill="#e0e0e0"/>
<text x="1708.5" y="802.0" font-size="21" textLength="22.8" lengthAdjust="spacingAndGlyphs" fill="#dcdcdc" stroke="#dcdcdc" stroke-width="0.27" >0.7</text>
<rect x="1113.0" y="176.8" width="6.0" height="1.8" fill="#e0e0e0"/>
<text x="1089.8" y="185.4" font-size="21" textLength="22.8" lengthAdjust="spacingAndGlyphs" fill="#dcdcdc" stroke="#dcdcdc" stroke-width="0.27" >0.7</text>
<rect x="1805.4" y="772.2" width="2.0" height="7.8" fill="#e0e0e0"/>
<text x="1794.7" y="802.0" font-size="21" textLength="22.8" lengthAdjust="spacingAndGlyphs" fill="#dcdcdc" stroke="#dcdcdc" stroke-width="0.27" >0.8</text>
<rect x="1113.0" y="90.4" width="6.0" height="1.8" fill="#e0e0e0"/>
<text x="1089.8" y="99.0" font-size="21" textLength="22.8" lengthAdjust="spacingAndGlyphs" fill="#dcdcdc" stroke="#dcdcdc" stroke-width="0.27" >0.8</text>
<text x="1423.7" y="50.3" font-size="20" textLength="84.5" lengthAdjust="spacingAndGlyphs" fill="#dcdcdc" stroke="#dcdcdc" stroke-width="0.26" >CIE 1931 xy</text>
<rect x="1081.0" y="834.1" width="570.2" height="42.9" fill="url(#g38)"/>
<rect x="1081.0" y="834.1" width="19.4" height="42.9" fill="#000"/>
<rect x="1081.0" y="877.0" width="570.2" height="40.7" fill="#434343"/>
<rect x="1081.0" y="877.0" width="19.4" height="40.7" fill="url(#g39)"/>
<text x="1106.0" y="907.0" font-size="25" textLength="75.8" lengthAdjust="spacingAndGlyphs" fill="#f0f0f0" stroke="#f0f0f0" stroke-width="0.33" >x: CIE31</text>
<text x="1260.0" y="907.0" font-size="25" textLength="41.1" lengthAdjust="spacingAndGlyphs" fill="#f0f0f0" stroke="#f0f0f0" stroke-width="0.33" >0.33</text>
<text x="1339.3" y="907.0" font-size="25" textLength="41.1" lengthAdjust="spacingAndGlyphs" fill="#f0f0f0" stroke="#f0f0f0" stroke-width="0.33" >0.36</text>
<text x="1418.9" y="907.0" font-size="25" textLength="41.1" lengthAdjust="spacingAndGlyphs" fill="#f0f0f0" stroke="#f0f0f0" stroke-width="0.33" >0.39</text>
<text x="1498.2" y="907.0" font-size="25" textLength="41.1" lengthAdjust="spacingAndGlyphs" fill="#f0f0f0" stroke="#f0f0f0" stroke-width="0.33" >0.41</text>
<text x="1578.1" y="907.0" font-size="25" textLength="41.1" lengthAdjust="spacingAndGlyphs" fill="#f0f0f0" stroke="#f0f0f0" stroke-width="0.33" >0.44</text>
<rect x="1081.0" y="917.7" width="570.2" height="40.3" fill="#828282"/>
<rect x="1081.0" y="917.7" width="19.4" height="40.3" fill="url(#g39)"/>
<text x="1106.0" y="947.7" font-size="25" textLength="76.6" lengthAdjust="spacingAndGlyphs" fill="#f0f0f0" stroke="#f0f0f0" stroke-width="0.33" >y: CIE31</text>
<text x="1260.0" y="947.7" font-size="25" textLength="41.1" lengthAdjust="spacingAndGlyphs" fill="#f0f0f0" stroke="#f0f0f0" stroke-width="0.33" >0.36</text>
<text x="1339.3" y="947.7" font-size="25" textLength="41.1" lengthAdjust="spacingAndGlyphs" fill="#f0f0f0" stroke="#f0f0f0" stroke-width="0.33" >0.41</text>
<text x="1418.9" y="947.7" font-size="25" textLength="41.1" lengthAdjust="spacingAndGlyphs" fill="#f0f0f0" stroke="#f0f0f0" stroke-width="0.33" >0.45</text>
<text x="1498.2" y="947.7" font-size="25" textLength="41.1" lengthAdjust="spacingAndGlyphs" fill="#f0f0f0" stroke="#f0f0f0" stroke-width="0.33" >0.49</text>
<text x="1578.1" y="947.7" font-size="25" textLength="41.1" lengthAdjust="spacingAndGlyphs" fill="#f0f0f0" stroke="#f0f0f0" stroke-width="0.33" >0.53</text>
<rect x="1081.0" y="958.0" width="570.2" height="39.9" fill="#434343"/>
<rect x="1081.0" y="958.0" width="19.4" height="39.9" fill="url(#g39)"/>
<text x="1106.0" y="988.0" font-size="25" textLength="11.2" lengthAdjust="spacingAndGlyphs" fill="#f0f0f0" stroke="#f0f0f0" stroke-width="0.33" >Y</text>
<text x="1260.0" y="988.0" font-size="25" textLength="64.6" lengthAdjust="spacingAndGlyphs" fill="#f0f0f0" stroke="#f0f0f0" stroke-width="0.33" >185.83</text>
<text x="1339.3" y="988.0" font-size="25" textLength="64.6" lengthAdjust="spacingAndGlyphs" fill="#f0f0f0" stroke="#f0f0f0" stroke-width="0.33" >183.75</text>
<text x="1418.9" y="988.0" font-size="25" textLength="64.6" lengthAdjust="spacingAndGlyphs" fill="#f0f0f0" stroke="#f0f0f0" stroke-width="0.33" >183.61</text>
<text x="1498.2" y="988.0" font-size="25" textLength="64.6" lengthAdjust="spacingAndGlyphs" fill="#f0f0f0" stroke="#f0f0f0" stroke-width="0.33" >181.93</text>
<text x="1578.1" y="988.0" font-size="25" textLength="64.6" lengthAdjust="spacingAndGlyphs" fill="#f0f0f0" stroke="#f0f0f0" stroke-width="0.33" >183.18</text>
<rect x="1081.0" y="997.9" width="570.2" height="39.9" fill="#828282"/>
<rect x="1081.0" y="997.9" width="19.4" height="39.9" fill="url(#g39)"/>
<text x="1106.0" y="1027.9" font-size="25" textLength="137.8" lengthAdjust="spacingAndGlyphs" fill="#f0f0f0" stroke="#f0f0f0" stroke-width="0.33" >Target x:CIE31</text>
<text x="1260.0" y="1027.9" font-size="25" textLength="41.1" lengthAdjust="spacingAndGlyphs" fill="#f0f0f0" stroke="#f0f0f0" stroke-width="0.33" >0.33</text>
<text x="1339.3" y="1027.9" font-size="25" textLength="41.1" lengthAdjust="spacingAndGlyphs" fill="#f0f0f0" stroke="#f0f0f0" stroke-width="0.33" >0.36</text>
<text x="1418.9" y="1027.9" font-size="25" textLength="41.1" lengthAdjust="spacingAndGlyphs" fill="#f0f0f0" stroke="#f0f0f0" stroke-width="0.33" >0.38</text>
<text x="1498.2" y="1027.9" font-size="25" textLength="41.1" lengthAdjust="spacingAndGlyphs" fill="#f0f0f0" stroke="#f0f0f0" stroke-width="0.33" >0.40</text>
<text x="1578.1" y="1027.9" font-size="25" textLength="41.1" lengthAdjust="spacingAndGlyphs" fill="#f0f0f0" stroke="#f0f0f0" stroke-width="0.33" >0.42</text>
<rect x="1081.0" y="1037.8" width="570.2" height="40.1" fill="#434343"/>
<rect x="1081.0" y="1037.8" width="19.4" height="40.1" fill="url(#g39)"/>
<text x="1106.0" y="1067.8" font-size="25" textLength="137.8" lengthAdjust="spacingAndGlyphs" fill="#f0f0f0" stroke="#f0f0f0" stroke-width="0.33" >Target y:CIE31</text>
<text x="1260.0" y="1067.8" font-size="25" textLength="41.1" lengthAdjust="spacingAndGlyphs" fill="#f0f0f0" stroke="#f0f0f0" stroke-width="0.33" >0.36</text>
<text x="1339.3" y="1067.8" font-size="25" textLength="41.1" lengthAdjust="spacingAndGlyphs" fill="#f0f0f0" stroke="#f0f0f0" stroke-width="0.33" >0.40</text>
<text x="1418.9" y="1067.8" font-size="25" textLength="41.1" lengthAdjust="spacingAndGlyphs" fill="#f0f0f0" stroke="#f0f0f0" stroke-width="0.33" >0.44</text>
<text x="1498.2" y="1067.8" font-size="25" textLength="41.1" lengthAdjust="spacingAndGlyphs" fill="#f0f0f0" stroke="#f0f0f0" stroke-width="0.33" >0.47</text>
<text x="1578.1" y="1067.8" font-size="25" textLength="41.1" lengthAdjust="spacingAndGlyphs" fill="#f0f0f0" stroke="#f0f0f0" stroke-width="0.33" >0.51</text>
<rect x="1081.0" y="1077.9" width="570.2" height="39.9" fill="#828282"/>
<rect x="1081.0" y="1077.9" width="19.4" height="39.9" fill="url(#g39)"/>
<text x="1106.0" y="1107.9" font-size="25" textLength="78.6" lengthAdjust="spacingAndGlyphs" fill="#f0f0f0" stroke="#f0f0f0" stroke-width="0.33" >Target Y</text>
<text x="1260.0" y="1107.9" font-size="25" textLength="64.6" lengthAdjust="spacingAndGlyphs" fill="#f0f0f0" stroke="#f0f0f0" stroke-width="0.33" >190.30</text>
<text x="1339.3" y="1107.9" font-size="25" textLength="64.6" lengthAdjust="spacingAndGlyphs" fill="#f0f0f0" stroke="#f0f0f0" stroke-width="0.33" >186.96</text>
<text x="1418.9" y="1107.9" font-size="25" textLength="64.6" lengthAdjust="spacingAndGlyphs" fill="#f0f0f0" stroke="#f0f0f0" stroke-width="0.33" >184.39</text>
<text x="1498.2" y="1107.9" font-size="25" textLength="64.6" lengthAdjust="spacingAndGlyphs" fill="#f0f0f0" stroke="#f0f0f0" stroke-width="0.33" >182.38</text>
<text x="1578.1" y="1107.9" font-size="25" textLength="64.6" lengthAdjust="spacingAndGlyphs" fill="#f0f0f0" stroke="#f0f0f0" stroke-width="0.33" >180.43</text>
<text x="1260.0" y="864.8" font-size="25" textLength="38.5" lengthAdjust="spacingAndGlyphs" fill="#f4f4f4" stroke="#f4f4f4" stroke-width="0.33" >20%</text>
<text x="1339.3" y="864.8" font-size="25" textLength="38.5" lengthAdjust="spacingAndGlyphs" fill="#f4f4f4" stroke="#f4f4f4" stroke-width="0.33" >40%</text>
<text x="1418.9" y="864.8" font-size="25" textLength="38.5" lengthAdjust="spacingAndGlyphs" fill="#f4f4f4" stroke="#f4f4f4" stroke-width="0.33" >60%</text>
<text x="1498.2" y="864.8" font-size="25" textLength="38.5" lengthAdjust="spacingAndGlyphs" fill="#f4f4f4" stroke="#f4f4f4" stroke-width="0.33" >80%</text>
<text x="1578.1" y="864.8" font-size="25" textLength="49.2" lengthAdjust="spacingAndGlyphs" fill="#f4f4f4" stroke="#f4f4f4" stroke-width="0.33" >100%</text>
</svg>
</body></html>
